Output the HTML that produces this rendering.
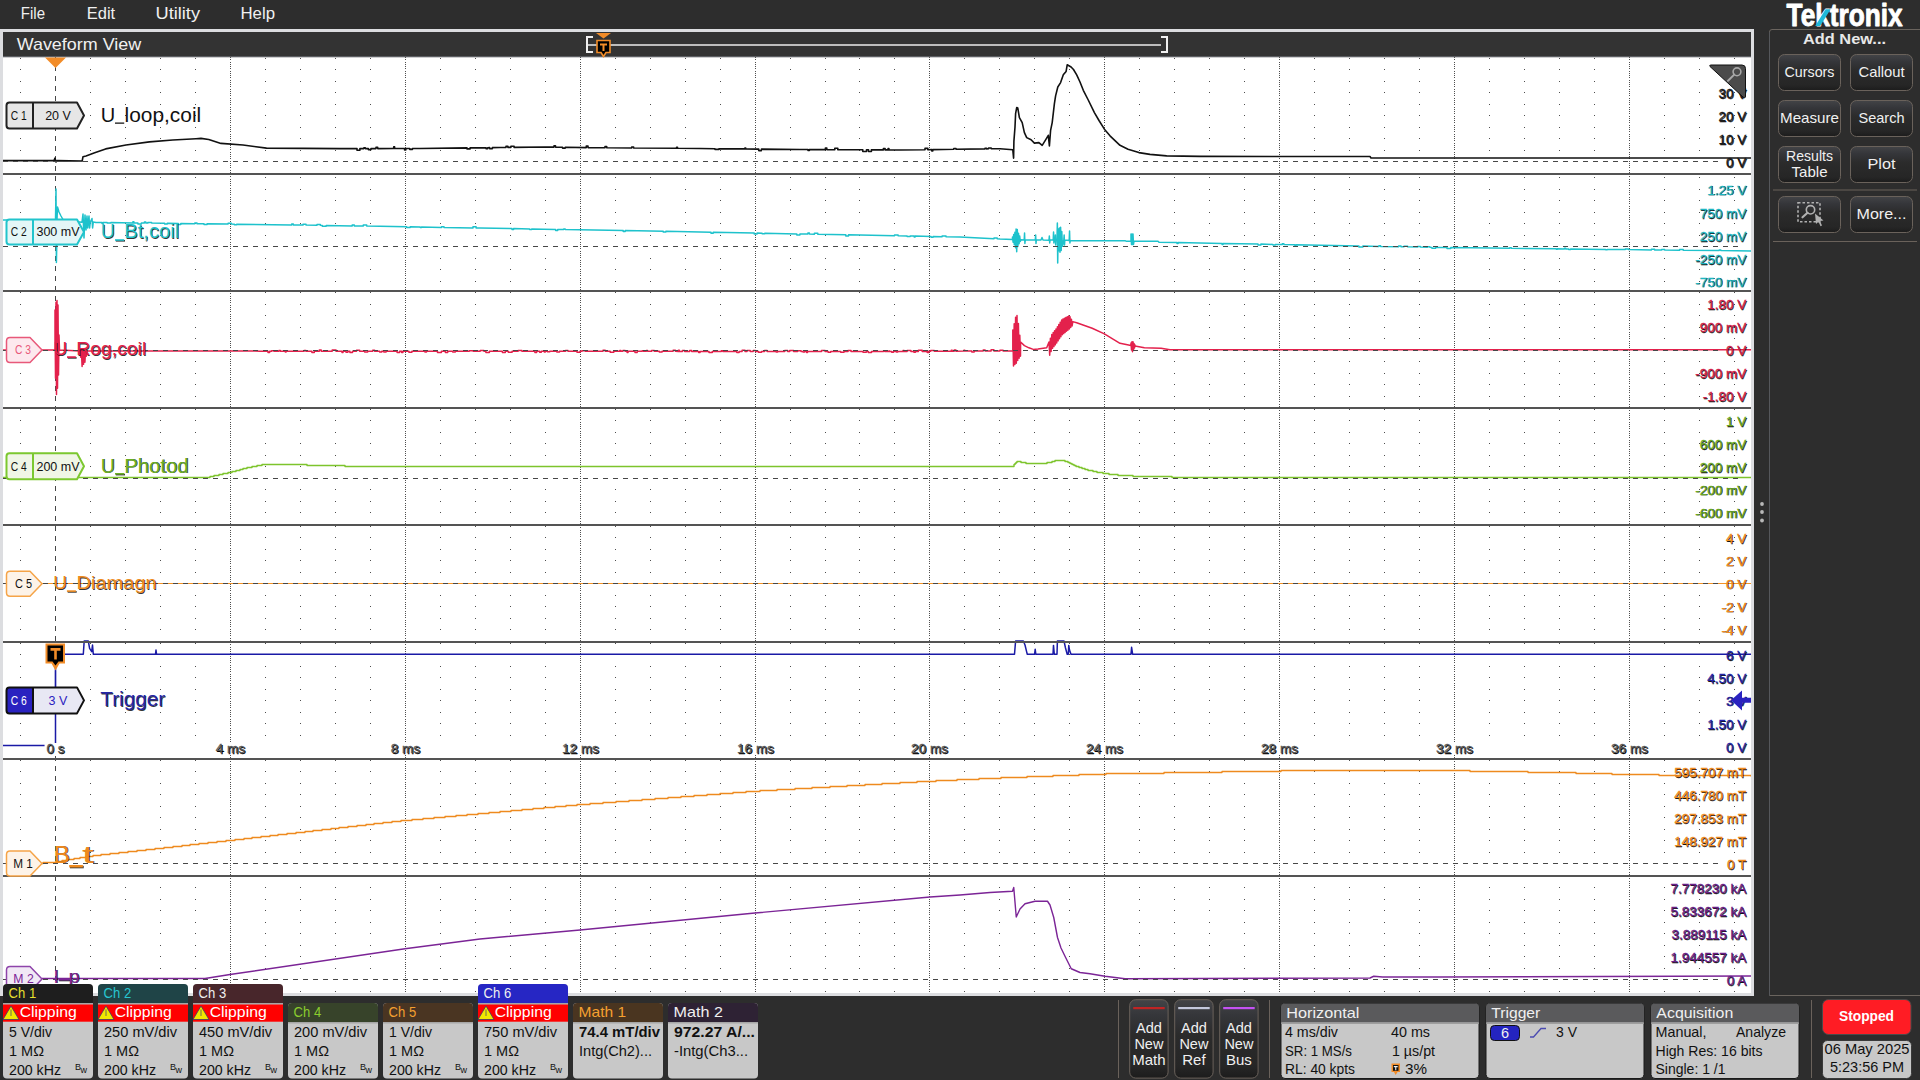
<!DOCTYPE html><html><head><meta charset="utf-8"><style>html,body{margin:0;padding:0;background:#2d2d2d;width:1920px;height:1080px;overflow:hidden}svg{position:absolute;left:0;top:0;font-family:"Liberation Sans",sans-serif}</style></head><body>
<svg width="1920" height="1080" viewBox="0 0 1920 1080">
<defs><linearGradient id="btn" x1="0" y1="0" x2="0" y2="1"><stop offset="0" stop-color="#434447"/><stop offset="0.2" stop-color="#35363a"/><stop offset="0.45" stop-color="#2b2b2b"/><stop offset="0.85" stop-color="#262626"/><stop offset="1" stop-color="#1c1c1c"/></linearGradient><clipPath id="plotclip"><rect x="3" y="57" width="1748" height="936"/></clipPath></defs>
<rect x="0" y="0" width="1920" height="1080" fill="#2d2d2d"/>
<text x="20.8" y="19.2" font-size="16" fill="#f0f0f0" textLength="24.2" lengthAdjust="spacingAndGlyphs">File</text>
<text x="86.8" y="19.2" font-size="16" fill="#f0f0f0" textLength="28.4" lengthAdjust="spacingAndGlyphs">Edit</text>
<text x="155.5" y="19.2" font-size="16" fill="#f0f0f0" textLength="44.5" lengthAdjust="spacingAndGlyphs">Utility</text>
<text x="240.5" y="19.2" font-size="16" fill="#f0f0f0" textLength="34.5" lengthAdjust="spacingAndGlyphs">Help</text>
<rect x="0" y="29" width="1754" height="967" fill="#dcdde0"/>
<rect x="3" y="32" width="1748" height="24" fill="#333333"/>
<rect x="3" y="56" width="1748" height="1.5" fill="#5c5e62"/>
<rect x="3" y="57.5" width="1748" height="935.5" fill="#ffffff"/>
<text x="16.7" y="50" font-size="17" fill="#f0f0f0" textLength="124.5" lengthAdjust="spacingAndGlyphs">Waveform View</text>
<path d="M593 37H587V52H593" fill="none" stroke="#f0f0f0" stroke-width="2"/>
<rect x="588" y="44" width="573" height="2" fill="#bdbdbd"/>
<path d="M1161 37H1167V52H1161" fill="none" stroke="#f0f0f0" stroke-width="2"/>
<path d="M596 33H611L603.5 38.5Z" fill="#f28c28"/>
<path d="M597 40.5H610V52.5H606L603.5 56.5L601 52.5H597Z" fill="#000" stroke="#f28c28" stroke-width="1.6"/>
<path d="M600 43.5H607V45.5H604.5V51H602.5V45.5H600Z" fill="#f28c28"/>
<g clip-path="url(#plotclip)">
<path d="M20 58.5h1M90 58.5h1M125 58.5h1M160 58.5h1M195 58.5h1M265 58.5h1M300 58.5h1M335 58.5h1M370 58.5h1M440 58.5h1M475 58.5h1M510 58.5h1M545 58.5h1M615 58.5h1M650 58.5h1M685 58.5h1M720 58.5h1M790 58.5h1M825 58.5h1M859 58.5h1M894 58.5h1M964 58.5h1M999 58.5h1M1034 58.5h1M1069 58.5h1M1139 58.5h1M1174 58.5h1M1209 58.5h1M1244 58.5h1M1314 58.5h1M1349 58.5h1M1384 58.5h1M1419 58.5h1M1489 58.5h1M1524 58.5h1M1559 58.5h1M1594 58.5h1M1664 58.5h1M1699 58.5h1M1734 58.5h1M20 69.5h1M90 69.5h1M125 69.5h1M160 69.5h1M195 69.5h1M265 69.5h1M300 69.5h1M335 69.5h1M370 69.5h1M440 69.5h1M475 69.5h1M510 69.5h1M545 69.5h1M615 69.5h1M650 69.5h1M685 69.5h1M720 69.5h1M790 69.5h1M825 69.5h1M859 69.5h1M894 69.5h1M964 69.5h1M999 69.5h1M1034 69.5h1M1069 69.5h1M1139 69.5h1M1174 69.5h1M1209 69.5h1M1244 69.5h1M1314 69.5h1M1349 69.5h1M1384 69.5h1M1419 69.5h1M1489 69.5h1M1524 69.5h1M1559 69.5h1M1594 69.5h1M1664 69.5h1M1699 69.5h1M1734 69.5h1M20 81.5h1M90 81.5h1M125 81.5h1M160 81.5h1M195 81.5h1M265 81.5h1M300 81.5h1M335 81.5h1M370 81.5h1M440 81.5h1M475 81.5h1M510 81.5h1M545 81.5h1M615 81.5h1M650 81.5h1M685 81.5h1M720 81.5h1M790 81.5h1M825 81.5h1M859 81.5h1M894 81.5h1M964 81.5h1M999 81.5h1M1034 81.5h1M1069 81.5h1M1139 81.5h1M1174 81.5h1M1209 81.5h1M1244 81.5h1M1314 81.5h1M1349 81.5h1M1384 81.5h1M1419 81.5h1M1489 81.5h1M1524 81.5h1M1559 81.5h1M1594 81.5h1M1664 81.5h1M1699 81.5h1M1734 81.5h1M20 92.5h1M90 92.5h1M125 92.5h1M160 92.5h1M195 92.5h1M265 92.5h1M300 92.5h1M335 92.5h1M370 92.5h1M440 92.5h1M475 92.5h1M510 92.5h1M545 92.5h1M615 92.5h1M650 92.5h1M685 92.5h1M720 92.5h1M790 92.5h1M825 92.5h1M859 92.5h1M894 92.5h1M964 92.5h1M999 92.5h1M1034 92.5h1M1069 92.5h1M1139 92.5h1M1174 92.5h1M1209 92.5h1M1244 92.5h1M1314 92.5h1M1349 92.5h1M1384 92.5h1M1419 92.5h1M1489 92.5h1M1524 92.5h1M1559 92.5h1M1594 92.5h1M1664 92.5h1M1699 92.5h1M1734 92.5h1M20 104.5h1M90 104.5h1M125 104.5h1M160 104.5h1M195 104.5h1M265 104.5h1M300 104.5h1M335 104.5h1M370 104.5h1M440 104.5h1M475 104.5h1M510 104.5h1M545 104.5h1M615 104.5h1M650 104.5h1M685 104.5h1M720 104.5h1M790 104.5h1M825 104.5h1M859 104.5h1M894 104.5h1M964 104.5h1M999 104.5h1M1034 104.5h1M1069 104.5h1M1139 104.5h1M1174 104.5h1M1209 104.5h1M1244 104.5h1M1314 104.5h1M1349 104.5h1M1384 104.5h1M1419 104.5h1M1489 104.5h1M1524 104.5h1M1559 104.5h1M1594 104.5h1M1664 104.5h1M1699 104.5h1M1734 104.5h1M20 115.5h1M90 115.5h1M125 115.5h1M160 115.5h1M195 115.5h1M265 115.5h1M300 115.5h1M335 115.5h1M370 115.5h1M440 115.5h1M475 115.5h1M510 115.5h1M545 115.5h1M615 115.5h1M650 115.5h1M685 115.5h1M720 115.5h1M790 115.5h1M825 115.5h1M859 115.5h1M894 115.5h1M964 115.5h1M999 115.5h1M1034 115.5h1M1069 115.5h1M1139 115.5h1M1174 115.5h1M1209 115.5h1M1244 115.5h1M1314 115.5h1M1349 115.5h1M1384 115.5h1M1419 115.5h1M1489 115.5h1M1524 115.5h1M1559 115.5h1M1594 115.5h1M1664 115.5h1M1699 115.5h1M1734 115.5h1M20 127.5h1M90 127.5h1M125 127.5h1M160 127.5h1M195 127.5h1M265 127.5h1M300 127.5h1M335 127.5h1M370 127.5h1M440 127.5h1M475 127.5h1M510 127.5h1M545 127.5h1M615 127.5h1M650 127.5h1M685 127.5h1M720 127.5h1M790 127.5h1M825 127.5h1M859 127.5h1M894 127.5h1M964 127.5h1M999 127.5h1M1034 127.5h1M1069 127.5h1M1139 127.5h1M1174 127.5h1M1209 127.5h1M1244 127.5h1M1314 127.5h1M1349 127.5h1M1384 127.5h1M1419 127.5h1M1489 127.5h1M1524 127.5h1M1559 127.5h1M1594 127.5h1M1664 127.5h1M1699 127.5h1M1734 127.5h1M20 138.5h1M90 138.5h1M125 138.5h1M160 138.5h1M195 138.5h1M265 138.5h1M300 138.5h1M335 138.5h1M370 138.5h1M440 138.5h1M475 138.5h1M510 138.5h1M545 138.5h1M615 138.5h1M650 138.5h1M685 138.5h1M720 138.5h1M790 138.5h1M825 138.5h1M859 138.5h1M894 138.5h1M964 138.5h1M999 138.5h1M1034 138.5h1M1069 138.5h1M1139 138.5h1M1174 138.5h1M1209 138.5h1M1244 138.5h1M1314 138.5h1M1349 138.5h1M1384 138.5h1M1419 138.5h1M1489 138.5h1M1524 138.5h1M1559 138.5h1M1594 138.5h1M1664 138.5h1M1699 138.5h1M1734 138.5h1M20 150.5h1M90 150.5h1M125 150.5h1M160 150.5h1M195 150.5h1M265 150.5h1M300 150.5h1M335 150.5h1M370 150.5h1M440 150.5h1M475 150.5h1M510 150.5h1M545 150.5h1M615 150.5h1M650 150.5h1M685 150.5h1M720 150.5h1M790 150.5h1M825 150.5h1M859 150.5h1M894 150.5h1M964 150.5h1M999 150.5h1M1034 150.5h1M1069 150.5h1M1139 150.5h1M1174 150.5h1M1209 150.5h1M1244 150.5h1M1314 150.5h1M1349 150.5h1M1384 150.5h1M1419 150.5h1M1489 150.5h1M1524 150.5h1M1559 150.5h1M1594 150.5h1M1664 150.5h1M1699 150.5h1M1734 150.5h1M20 177.5h1M90 177.5h1M125 177.5h1M160 177.5h1M195 177.5h1M265 177.5h1M300 177.5h1M335 177.5h1M370 177.5h1M440 177.5h1M475 177.5h1M510 177.5h1M545 177.5h1M615 177.5h1M650 177.5h1M685 177.5h1M720 177.5h1M790 177.5h1M825 177.5h1M859 177.5h1M894 177.5h1M964 177.5h1M999 177.5h1M1034 177.5h1M1069 177.5h1M1139 177.5h1M1174 177.5h1M1209 177.5h1M1244 177.5h1M1314 177.5h1M1349 177.5h1M1384 177.5h1M1419 177.5h1M1489 177.5h1M1524 177.5h1M1559 177.5h1M1594 177.5h1M1664 177.5h1M1699 177.5h1M1734 177.5h1M20 189.5h1M90 189.5h1M125 189.5h1M160 189.5h1M195 189.5h1M265 189.5h1M300 189.5h1M335 189.5h1M370 189.5h1M440 189.5h1M475 189.5h1M510 189.5h1M545 189.5h1M615 189.5h1M650 189.5h1M685 189.5h1M720 189.5h1M790 189.5h1M825 189.5h1M859 189.5h1M894 189.5h1M964 189.5h1M999 189.5h1M1034 189.5h1M1069 189.5h1M1139 189.5h1M1174 189.5h1M1209 189.5h1M1244 189.5h1M1314 189.5h1M1349 189.5h1M1384 189.5h1M1419 189.5h1M1489 189.5h1M1524 189.5h1M1559 189.5h1M1594 189.5h1M1664 189.5h1M1699 189.5h1M1734 189.5h1M20 200.5h1M90 200.5h1M125 200.5h1M160 200.5h1M195 200.5h1M265 200.5h1M300 200.5h1M335 200.5h1M370 200.5h1M440 200.5h1M475 200.5h1M510 200.5h1M545 200.5h1M615 200.5h1M650 200.5h1M685 200.5h1M720 200.5h1M790 200.5h1M825 200.5h1M859 200.5h1M894 200.5h1M964 200.5h1M999 200.5h1M1034 200.5h1M1069 200.5h1M1139 200.5h1M1174 200.5h1M1209 200.5h1M1244 200.5h1M1314 200.5h1M1349 200.5h1M1384 200.5h1M1419 200.5h1M1489 200.5h1M1524 200.5h1M1559 200.5h1M1594 200.5h1M1664 200.5h1M1699 200.5h1M1734 200.5h1M20 212.5h1M90 212.5h1M125 212.5h1M160 212.5h1M195 212.5h1M265 212.5h1M300 212.5h1M335 212.5h1M370 212.5h1M440 212.5h1M475 212.5h1M510 212.5h1M545 212.5h1M615 212.5h1M650 212.5h1M685 212.5h1M720 212.5h1M790 212.5h1M825 212.5h1M859 212.5h1M894 212.5h1M964 212.5h1M999 212.5h1M1034 212.5h1M1069 212.5h1M1139 212.5h1M1174 212.5h1M1209 212.5h1M1244 212.5h1M1314 212.5h1M1349 212.5h1M1384 212.5h1M1419 212.5h1M1489 212.5h1M1524 212.5h1M1559 212.5h1M1594 212.5h1M1664 212.5h1M1699 212.5h1M1734 212.5h1M20 223.5h1M90 223.5h1M125 223.5h1M160 223.5h1M195 223.5h1M265 223.5h1M300 223.5h1M335 223.5h1M370 223.5h1M440 223.5h1M475 223.5h1M510 223.5h1M545 223.5h1M615 223.5h1M650 223.5h1M685 223.5h1M720 223.5h1M790 223.5h1M825 223.5h1M859 223.5h1M894 223.5h1M964 223.5h1M999 223.5h1M1034 223.5h1M1069 223.5h1M1139 223.5h1M1174 223.5h1M1209 223.5h1M1244 223.5h1M1314 223.5h1M1349 223.5h1M1384 223.5h1M1419 223.5h1M1489 223.5h1M1524 223.5h1M1559 223.5h1M1594 223.5h1M1664 223.5h1M1699 223.5h1M1734 223.5h1M20 235.5h1M90 235.5h1M125 235.5h1M160 235.5h1M195 235.5h1M265 235.5h1M300 235.5h1M335 235.5h1M370 235.5h1M440 235.5h1M475 235.5h1M510 235.5h1M545 235.5h1M615 235.5h1M650 235.5h1M685 235.5h1M720 235.5h1M790 235.5h1M825 235.5h1M859 235.5h1M894 235.5h1M964 235.5h1M999 235.5h1M1034 235.5h1M1069 235.5h1M1139 235.5h1M1174 235.5h1M1209 235.5h1M1244 235.5h1M1314 235.5h1M1349 235.5h1M1384 235.5h1M1419 235.5h1M1489 235.5h1M1524 235.5h1M1559 235.5h1M1594 235.5h1M1664 235.5h1M1699 235.5h1M1734 235.5h1M20 258.5h1M90 258.5h1M125 258.5h1M160 258.5h1M195 258.5h1M265 258.5h1M300 258.5h1M335 258.5h1M370 258.5h1M440 258.5h1M475 258.5h1M510 258.5h1M545 258.5h1M615 258.5h1M650 258.5h1M685 258.5h1M720 258.5h1M790 258.5h1M825 258.5h1M859 258.5h1M894 258.5h1M964 258.5h1M999 258.5h1M1034 258.5h1M1069 258.5h1M1139 258.5h1M1174 258.5h1M1209 258.5h1M1244 258.5h1M1314 258.5h1M1349 258.5h1M1384 258.5h1M1419 258.5h1M1489 258.5h1M1524 258.5h1M1559 258.5h1M1594 258.5h1M1664 258.5h1M1699 258.5h1M1734 258.5h1M20 269.5h1M90 269.5h1M125 269.5h1M160 269.5h1M195 269.5h1M265 269.5h1M300 269.5h1M335 269.5h1M370 269.5h1M440 269.5h1M475 269.5h1M510 269.5h1M545 269.5h1M615 269.5h1M650 269.5h1M685 269.5h1M720 269.5h1M790 269.5h1M825 269.5h1M859 269.5h1M894 269.5h1M964 269.5h1M999 269.5h1M1034 269.5h1M1069 269.5h1M1139 269.5h1M1174 269.5h1M1209 269.5h1M1244 269.5h1M1314 269.5h1M1349 269.5h1M1384 269.5h1M1419 269.5h1M1489 269.5h1M1524 269.5h1M1559 269.5h1M1594 269.5h1M1664 269.5h1M1699 269.5h1M1734 269.5h1M20 281.5h1M90 281.5h1M125 281.5h1M160 281.5h1M195 281.5h1M265 281.5h1M300 281.5h1M335 281.5h1M370 281.5h1M440 281.5h1M475 281.5h1M510 281.5h1M545 281.5h1M615 281.5h1M650 281.5h1M685 281.5h1M720 281.5h1M790 281.5h1M825 281.5h1M859 281.5h1M894 281.5h1M964 281.5h1M999 281.5h1M1034 281.5h1M1069 281.5h1M1139 281.5h1M1174 281.5h1M1209 281.5h1M1244 281.5h1M1314 281.5h1M1349 281.5h1M1384 281.5h1M1419 281.5h1M1489 281.5h1M1524 281.5h1M1559 281.5h1M1594 281.5h1M1664 281.5h1M1699 281.5h1M1734 281.5h1M20 292.5h1M90 292.5h1M125 292.5h1M160 292.5h1M195 292.5h1M265 292.5h1M300 292.5h1M335 292.5h1M370 292.5h1M440 292.5h1M475 292.5h1M510 292.5h1M545 292.5h1M615 292.5h1M650 292.5h1M685 292.5h1M720 292.5h1M790 292.5h1M825 292.5h1M859 292.5h1M894 292.5h1M964 292.5h1M999 292.5h1M1034 292.5h1M1069 292.5h1M1139 292.5h1M1174 292.5h1M1209 292.5h1M1244 292.5h1M1314 292.5h1M1349 292.5h1M1384 292.5h1M1419 292.5h1M1489 292.5h1M1524 292.5h1M1559 292.5h1M1594 292.5h1M1664 292.5h1M1699 292.5h1M1734 292.5h1M20 304.5h1M90 304.5h1M125 304.5h1M160 304.5h1M195 304.5h1M265 304.5h1M300 304.5h1M335 304.5h1M370 304.5h1M440 304.5h1M475 304.5h1M510 304.5h1M545 304.5h1M615 304.5h1M650 304.5h1M685 304.5h1M720 304.5h1M790 304.5h1M825 304.5h1M859 304.5h1M894 304.5h1M964 304.5h1M999 304.5h1M1034 304.5h1M1069 304.5h1M1139 304.5h1M1174 304.5h1M1209 304.5h1M1244 304.5h1M1314 304.5h1M1349 304.5h1M1384 304.5h1M1419 304.5h1M1489 304.5h1M1524 304.5h1M1559 304.5h1M1594 304.5h1M1664 304.5h1M1699 304.5h1M1734 304.5h1M20 315.5h1M90 315.5h1M125 315.5h1M160 315.5h1M195 315.5h1M265 315.5h1M300 315.5h1M335 315.5h1M370 315.5h1M440 315.5h1M475 315.5h1M510 315.5h1M545 315.5h1M615 315.5h1M650 315.5h1M685 315.5h1M720 315.5h1M790 315.5h1M825 315.5h1M859 315.5h1M894 315.5h1M964 315.5h1M999 315.5h1M1034 315.5h1M1069 315.5h1M1139 315.5h1M1174 315.5h1M1209 315.5h1M1244 315.5h1M1314 315.5h1M1349 315.5h1M1384 315.5h1M1419 315.5h1M1489 315.5h1M1524 315.5h1M1559 315.5h1M1594 315.5h1M1664 315.5h1M1699 315.5h1M1734 315.5h1M20 327.5h1M90 327.5h1M125 327.5h1M160 327.5h1M195 327.5h1M265 327.5h1M300 327.5h1M335 327.5h1M370 327.5h1M440 327.5h1M475 327.5h1M510 327.5h1M545 327.5h1M615 327.5h1M650 327.5h1M685 327.5h1M720 327.5h1M790 327.5h1M825 327.5h1M859 327.5h1M894 327.5h1M964 327.5h1M999 327.5h1M1034 327.5h1M1069 327.5h1M1139 327.5h1M1174 327.5h1M1209 327.5h1M1244 327.5h1M1314 327.5h1M1349 327.5h1M1384 327.5h1M1419 327.5h1M1489 327.5h1M1524 327.5h1M1559 327.5h1M1594 327.5h1M1664 327.5h1M1699 327.5h1M1734 327.5h1M20 338.5h1M90 338.5h1M125 338.5h1M160 338.5h1M195 338.5h1M265 338.5h1M300 338.5h1M335 338.5h1M370 338.5h1M440 338.5h1M475 338.5h1M510 338.5h1M545 338.5h1M615 338.5h1M650 338.5h1M685 338.5h1M720 338.5h1M790 338.5h1M825 338.5h1M859 338.5h1M894 338.5h1M964 338.5h1M999 338.5h1M1034 338.5h1M1069 338.5h1M1139 338.5h1M1174 338.5h1M1209 338.5h1M1244 338.5h1M1314 338.5h1M1349 338.5h1M1384 338.5h1M1419 338.5h1M1489 338.5h1M1524 338.5h1M1559 338.5h1M1594 338.5h1M1664 338.5h1M1699 338.5h1M1734 338.5h1M20 361.5h1M90 361.5h1M125 361.5h1M160 361.5h1M195 361.5h1M265 361.5h1M300 361.5h1M335 361.5h1M370 361.5h1M440 361.5h1M475 361.5h1M510 361.5h1M545 361.5h1M615 361.5h1M650 361.5h1M685 361.5h1M720 361.5h1M790 361.5h1M825 361.5h1M859 361.5h1M894 361.5h1M964 361.5h1M999 361.5h1M1034 361.5h1M1069 361.5h1M1139 361.5h1M1174 361.5h1M1209 361.5h1M1244 361.5h1M1314 361.5h1M1349 361.5h1M1384 361.5h1M1419 361.5h1M1489 361.5h1M1524 361.5h1M1559 361.5h1M1594 361.5h1M1664 361.5h1M1699 361.5h1M1734 361.5h1M20 373.5h1M90 373.5h1M125 373.5h1M160 373.5h1M195 373.5h1M265 373.5h1M300 373.5h1M335 373.5h1M370 373.5h1M440 373.5h1M475 373.5h1M510 373.5h1M545 373.5h1M615 373.5h1M650 373.5h1M685 373.5h1M720 373.5h1M790 373.5h1M825 373.5h1M859 373.5h1M894 373.5h1M964 373.5h1M999 373.5h1M1034 373.5h1M1069 373.5h1M1139 373.5h1M1174 373.5h1M1209 373.5h1M1244 373.5h1M1314 373.5h1M1349 373.5h1M1384 373.5h1M1419 373.5h1M1489 373.5h1M1524 373.5h1M1559 373.5h1M1594 373.5h1M1664 373.5h1M1699 373.5h1M1734 373.5h1M20 384.5h1M90 384.5h1M125 384.5h1M160 384.5h1M195 384.5h1M265 384.5h1M300 384.5h1M335 384.5h1M370 384.5h1M440 384.5h1M475 384.5h1M510 384.5h1M545 384.5h1M615 384.5h1M650 384.5h1M685 384.5h1M720 384.5h1M790 384.5h1M825 384.5h1M859 384.5h1M894 384.5h1M964 384.5h1M999 384.5h1M1034 384.5h1M1069 384.5h1M1139 384.5h1M1174 384.5h1M1209 384.5h1M1244 384.5h1M1314 384.5h1M1349 384.5h1M1384 384.5h1M1419 384.5h1M1489 384.5h1M1524 384.5h1M1559 384.5h1M1594 384.5h1M1664 384.5h1M1699 384.5h1M1734 384.5h1M20 396.5h1M90 396.5h1M125 396.5h1M160 396.5h1M195 396.5h1M265 396.5h1M300 396.5h1M335 396.5h1M370 396.5h1M440 396.5h1M475 396.5h1M510 396.5h1M545 396.5h1M615 396.5h1M650 396.5h1M685 396.5h1M720 396.5h1M790 396.5h1M825 396.5h1M859 396.5h1M894 396.5h1M964 396.5h1M999 396.5h1M1034 396.5h1M1069 396.5h1M1139 396.5h1M1174 396.5h1M1209 396.5h1M1244 396.5h1M1314 396.5h1M1349 396.5h1M1384 396.5h1M1419 396.5h1M1489 396.5h1M1524 396.5h1M1559 396.5h1M1594 396.5h1M1664 396.5h1M1699 396.5h1M1734 396.5h1M20 409.5h1M90 409.5h1M125 409.5h1M160 409.5h1M195 409.5h1M265 409.5h1M300 409.5h1M335 409.5h1M370 409.5h1M440 409.5h1M475 409.5h1M510 409.5h1M545 409.5h1M615 409.5h1M650 409.5h1M685 409.5h1M720 409.5h1M790 409.5h1M825 409.5h1M859 409.5h1M894 409.5h1M964 409.5h1M999 409.5h1M1034 409.5h1M1069 409.5h1M1139 409.5h1M1174 409.5h1M1209 409.5h1M1244 409.5h1M1314 409.5h1M1349 409.5h1M1384 409.5h1M1419 409.5h1M1489 409.5h1M1524 409.5h1M1559 409.5h1M1594 409.5h1M1664 409.5h1M1699 409.5h1M1734 409.5h1M20 420.5h1M90 420.5h1M125 420.5h1M160 420.5h1M195 420.5h1M265 420.5h1M300 420.5h1M335 420.5h1M370 420.5h1M440 420.5h1M475 420.5h1M510 420.5h1M545 420.5h1M615 420.5h1M650 420.5h1M685 420.5h1M720 420.5h1M790 420.5h1M825 420.5h1M859 420.5h1M894 420.5h1M964 420.5h1M999 420.5h1M1034 420.5h1M1069 420.5h1M1139 420.5h1M1174 420.5h1M1209 420.5h1M1244 420.5h1M1314 420.5h1M1349 420.5h1M1384 420.5h1M1419 420.5h1M1489 420.5h1M1524 420.5h1M1559 420.5h1M1594 420.5h1M1664 420.5h1M1699 420.5h1M1734 420.5h1M20 432.5h1M90 432.5h1M125 432.5h1M160 432.5h1M195 432.5h1M265 432.5h1M300 432.5h1M335 432.5h1M370 432.5h1M440 432.5h1M475 432.5h1M510 432.5h1M545 432.5h1M615 432.5h1M650 432.5h1M685 432.5h1M720 432.5h1M790 432.5h1M825 432.5h1M859 432.5h1M894 432.5h1M964 432.5h1M999 432.5h1M1034 432.5h1M1069 432.5h1M1139 432.5h1M1174 432.5h1M1209 432.5h1M1244 432.5h1M1314 432.5h1M1349 432.5h1M1384 432.5h1M1419 432.5h1M1489 432.5h1M1524 432.5h1M1559 432.5h1M1594 432.5h1M1664 432.5h1M1699 432.5h1M1734 432.5h1M20 443.5h1M90 443.5h1M125 443.5h1M160 443.5h1M195 443.5h1M265 443.5h1M300 443.5h1M335 443.5h1M370 443.5h1M440 443.5h1M475 443.5h1M510 443.5h1M545 443.5h1M615 443.5h1M650 443.5h1M685 443.5h1M720 443.5h1M790 443.5h1M825 443.5h1M859 443.5h1M894 443.5h1M964 443.5h1M999 443.5h1M1034 443.5h1M1069 443.5h1M1139 443.5h1M1174 443.5h1M1209 443.5h1M1244 443.5h1M1314 443.5h1M1349 443.5h1M1384 443.5h1M1419 443.5h1M1489 443.5h1M1524 443.5h1M1559 443.5h1M1594 443.5h1M1664 443.5h1M1699 443.5h1M1734 443.5h1M20 455.5h1M90 455.5h1M125 455.5h1M160 455.5h1M195 455.5h1M265 455.5h1M300 455.5h1M335 455.5h1M370 455.5h1M440 455.5h1M475 455.5h1M510 455.5h1M545 455.5h1M615 455.5h1M650 455.5h1M685 455.5h1M720 455.5h1M790 455.5h1M825 455.5h1M859 455.5h1M894 455.5h1M964 455.5h1M999 455.5h1M1034 455.5h1M1069 455.5h1M1139 455.5h1M1174 455.5h1M1209 455.5h1M1244 455.5h1M1314 455.5h1M1349 455.5h1M1384 455.5h1M1419 455.5h1M1489 455.5h1M1524 455.5h1M1559 455.5h1M1594 455.5h1M1664 455.5h1M1699 455.5h1M1734 455.5h1M20 466.5h1M90 466.5h1M125 466.5h1M160 466.5h1M195 466.5h1M265 466.5h1M300 466.5h1M335 466.5h1M370 466.5h1M440 466.5h1M475 466.5h1M510 466.5h1M545 466.5h1M615 466.5h1M650 466.5h1M685 466.5h1M720 466.5h1M790 466.5h1M825 466.5h1M859 466.5h1M894 466.5h1M964 466.5h1M999 466.5h1M1034 466.5h1M1069 466.5h1M1139 466.5h1M1174 466.5h1M1209 466.5h1M1244 466.5h1M1314 466.5h1M1349 466.5h1M1384 466.5h1M1419 466.5h1M1489 466.5h1M1524 466.5h1M1559 466.5h1M1594 466.5h1M1664 466.5h1M1699 466.5h1M1734 466.5h1M20 489.5h1M90 489.5h1M125 489.5h1M160 489.5h1M195 489.5h1M265 489.5h1M300 489.5h1M335 489.5h1M370 489.5h1M440 489.5h1M475 489.5h1M510 489.5h1M545 489.5h1M615 489.5h1M650 489.5h1M685 489.5h1M720 489.5h1M790 489.5h1M825 489.5h1M859 489.5h1M894 489.5h1M964 489.5h1M999 489.5h1M1034 489.5h1M1069 489.5h1M1139 489.5h1M1174 489.5h1M1209 489.5h1M1244 489.5h1M1314 489.5h1M1349 489.5h1M1384 489.5h1M1419 489.5h1M1489 489.5h1M1524 489.5h1M1559 489.5h1M1594 489.5h1M1664 489.5h1M1699 489.5h1M1734 489.5h1M20 501.5h1M90 501.5h1M125 501.5h1M160 501.5h1M195 501.5h1M265 501.5h1M300 501.5h1M335 501.5h1M370 501.5h1M440 501.5h1M475 501.5h1M510 501.5h1M545 501.5h1M615 501.5h1M650 501.5h1M685 501.5h1M720 501.5h1M790 501.5h1M825 501.5h1M859 501.5h1M894 501.5h1M964 501.5h1M999 501.5h1M1034 501.5h1M1069 501.5h1M1139 501.5h1M1174 501.5h1M1209 501.5h1M1244 501.5h1M1314 501.5h1M1349 501.5h1M1384 501.5h1M1419 501.5h1M1489 501.5h1M1524 501.5h1M1559 501.5h1M1594 501.5h1M1664 501.5h1M1699 501.5h1M1734 501.5h1M20 512.5h1M90 512.5h1M125 512.5h1M160 512.5h1M195 512.5h1M265 512.5h1M300 512.5h1M335 512.5h1M370 512.5h1M440 512.5h1M475 512.5h1M510 512.5h1M545 512.5h1M615 512.5h1M650 512.5h1M685 512.5h1M720 512.5h1M790 512.5h1M825 512.5h1M859 512.5h1M894 512.5h1M964 512.5h1M999 512.5h1M1034 512.5h1M1069 512.5h1M1139 512.5h1M1174 512.5h1M1209 512.5h1M1244 512.5h1M1314 512.5h1M1349 512.5h1M1384 512.5h1M1419 512.5h1M1489 512.5h1M1524 512.5h1M1559 512.5h1M1594 512.5h1M1664 512.5h1M1699 512.5h1M1734 512.5h1M20 526.5h1M90 526.5h1M125 526.5h1M160 526.5h1M195 526.5h1M265 526.5h1M300 526.5h1M335 526.5h1M370 526.5h1M440 526.5h1M475 526.5h1M510 526.5h1M545 526.5h1M615 526.5h1M650 526.5h1M685 526.5h1M720 526.5h1M790 526.5h1M825 526.5h1M859 526.5h1M894 526.5h1M964 526.5h1M999 526.5h1M1034 526.5h1M1069 526.5h1M1139 526.5h1M1174 526.5h1M1209 526.5h1M1244 526.5h1M1314 526.5h1M1349 526.5h1M1384 526.5h1M1419 526.5h1M1489 526.5h1M1524 526.5h1M1559 526.5h1M1594 526.5h1M1664 526.5h1M1699 526.5h1M1734 526.5h1M20 537.5h1M90 537.5h1M125 537.5h1M160 537.5h1M195 537.5h1M265 537.5h1M300 537.5h1M335 537.5h1M370 537.5h1M440 537.5h1M475 537.5h1M510 537.5h1M545 537.5h1M615 537.5h1M650 537.5h1M685 537.5h1M720 537.5h1M790 537.5h1M825 537.5h1M859 537.5h1M894 537.5h1M964 537.5h1M999 537.5h1M1034 537.5h1M1069 537.5h1M1139 537.5h1M1174 537.5h1M1209 537.5h1M1244 537.5h1M1314 537.5h1M1349 537.5h1M1384 537.5h1M1419 537.5h1M1489 537.5h1M1524 537.5h1M1559 537.5h1M1594 537.5h1M1664 537.5h1M1699 537.5h1M1734 537.5h1M20 549.5h1M90 549.5h1M125 549.5h1M160 549.5h1M195 549.5h1M265 549.5h1M300 549.5h1M335 549.5h1M370 549.5h1M440 549.5h1M475 549.5h1M510 549.5h1M545 549.5h1M615 549.5h1M650 549.5h1M685 549.5h1M720 549.5h1M790 549.5h1M825 549.5h1M859 549.5h1M894 549.5h1M964 549.5h1M999 549.5h1M1034 549.5h1M1069 549.5h1M1139 549.5h1M1174 549.5h1M1209 549.5h1M1244 549.5h1M1314 549.5h1M1349 549.5h1M1384 549.5h1M1419 549.5h1M1489 549.5h1M1524 549.5h1M1559 549.5h1M1594 549.5h1M1664 549.5h1M1699 549.5h1M1734 549.5h1M20 560.5h1M90 560.5h1M125 560.5h1M160 560.5h1M195 560.5h1M265 560.5h1M300 560.5h1M335 560.5h1M370 560.5h1M440 560.5h1M475 560.5h1M510 560.5h1M545 560.5h1M615 560.5h1M650 560.5h1M685 560.5h1M720 560.5h1M790 560.5h1M825 560.5h1M859 560.5h1M894 560.5h1M964 560.5h1M999 560.5h1M1034 560.5h1M1069 560.5h1M1139 560.5h1M1174 560.5h1M1209 560.5h1M1244 560.5h1M1314 560.5h1M1349 560.5h1M1384 560.5h1M1419 560.5h1M1489 560.5h1M1524 560.5h1M1559 560.5h1M1594 560.5h1M1664 560.5h1M1699 560.5h1M1734 560.5h1M20 572.5h1M90 572.5h1M125 572.5h1M160 572.5h1M195 572.5h1M265 572.5h1M300 572.5h1M335 572.5h1M370 572.5h1M440 572.5h1M475 572.5h1M510 572.5h1M545 572.5h1M615 572.5h1M650 572.5h1M685 572.5h1M720 572.5h1M790 572.5h1M825 572.5h1M859 572.5h1M894 572.5h1M964 572.5h1M999 572.5h1M1034 572.5h1M1069 572.5h1M1139 572.5h1M1174 572.5h1M1209 572.5h1M1244 572.5h1M1314 572.5h1M1349 572.5h1M1384 572.5h1M1419 572.5h1M1489 572.5h1M1524 572.5h1M1559 572.5h1M1594 572.5h1M1664 572.5h1M1699 572.5h1M1734 572.5h1M20 595.5h1M90 595.5h1M125 595.5h1M160 595.5h1M195 595.5h1M265 595.5h1M300 595.5h1M335 595.5h1M370 595.5h1M440 595.5h1M475 595.5h1M510 595.5h1M545 595.5h1M615 595.5h1M650 595.5h1M685 595.5h1M720 595.5h1M790 595.5h1M825 595.5h1M859 595.5h1M894 595.5h1M964 595.5h1M999 595.5h1M1034 595.5h1M1069 595.5h1M1139 595.5h1M1174 595.5h1M1209 595.5h1M1244 595.5h1M1314 595.5h1M1349 595.5h1M1384 595.5h1M1419 595.5h1M1489 595.5h1M1524 595.5h1M1559 595.5h1M1594 595.5h1M1664 595.5h1M1699 595.5h1M1734 595.5h1M20 606.5h1M90 606.5h1M125 606.5h1M160 606.5h1M195 606.5h1M265 606.5h1M300 606.5h1M335 606.5h1M370 606.5h1M440 606.5h1M475 606.5h1M510 606.5h1M545 606.5h1M615 606.5h1M650 606.5h1M685 606.5h1M720 606.5h1M790 606.5h1M825 606.5h1M859 606.5h1M894 606.5h1M964 606.5h1M999 606.5h1M1034 606.5h1M1069 606.5h1M1139 606.5h1M1174 606.5h1M1209 606.5h1M1244 606.5h1M1314 606.5h1M1349 606.5h1M1384 606.5h1M1419 606.5h1M1489 606.5h1M1524 606.5h1M1559 606.5h1M1594 606.5h1M1664 606.5h1M1699 606.5h1M1734 606.5h1M20 618.5h1M90 618.5h1M125 618.5h1M160 618.5h1M195 618.5h1M265 618.5h1M300 618.5h1M335 618.5h1M370 618.5h1M440 618.5h1M475 618.5h1M510 618.5h1M545 618.5h1M615 618.5h1M650 618.5h1M685 618.5h1M720 618.5h1M790 618.5h1M825 618.5h1M859 618.5h1M894 618.5h1M964 618.5h1M999 618.5h1M1034 618.5h1M1069 618.5h1M1139 618.5h1M1174 618.5h1M1209 618.5h1M1244 618.5h1M1314 618.5h1M1349 618.5h1M1384 618.5h1M1419 618.5h1M1489 618.5h1M1524 618.5h1M1559 618.5h1M1594 618.5h1M1664 618.5h1M1699 618.5h1M1734 618.5h1M20 629.5h1M90 629.5h1M125 629.5h1M160 629.5h1M195 629.5h1M265 629.5h1M300 629.5h1M335 629.5h1M370 629.5h1M440 629.5h1M475 629.5h1M510 629.5h1M545 629.5h1M615 629.5h1M650 629.5h1M685 629.5h1M720 629.5h1M790 629.5h1M825 629.5h1M859 629.5h1M894 629.5h1M964 629.5h1M999 629.5h1M1034 629.5h1M1069 629.5h1M1139 629.5h1M1174 629.5h1M1209 629.5h1M1244 629.5h1M1314 629.5h1M1349 629.5h1M1384 629.5h1M1419 629.5h1M1489 629.5h1M1524 629.5h1M1559 629.5h1M1594 629.5h1M1664 629.5h1M1699 629.5h1M1734 629.5h1M20 643.5h1M90 643.5h1M125 643.5h1M160 643.5h1M195 643.5h1M265 643.5h1M300 643.5h1M335 643.5h1M370 643.5h1M440 643.5h1M475 643.5h1M510 643.5h1M545 643.5h1M615 643.5h1M650 643.5h1M685 643.5h1M720 643.5h1M790 643.5h1M825 643.5h1M859 643.5h1M894 643.5h1M964 643.5h1M999 643.5h1M1034 643.5h1M1069 643.5h1M1139 643.5h1M1174 643.5h1M1209 643.5h1M1244 643.5h1M1314 643.5h1M1349 643.5h1M1384 643.5h1M1419 643.5h1M1489 643.5h1M1524 643.5h1M1559 643.5h1M1594 643.5h1M1664 643.5h1M1699 643.5h1M1734 643.5h1M20 654.5h1M90 654.5h1M125 654.5h1M160 654.5h1M195 654.5h1M265 654.5h1M300 654.5h1M335 654.5h1M370 654.5h1M440 654.5h1M475 654.5h1M510 654.5h1M545 654.5h1M615 654.5h1M650 654.5h1M685 654.5h1M720 654.5h1M790 654.5h1M825 654.5h1M859 654.5h1M894 654.5h1M964 654.5h1M999 654.5h1M1034 654.5h1M1069 654.5h1M1139 654.5h1M1174 654.5h1M1209 654.5h1M1244 654.5h1M1314 654.5h1M1349 654.5h1M1384 654.5h1M1419 654.5h1M1489 654.5h1M1524 654.5h1M1559 654.5h1M1594 654.5h1M1664 654.5h1M1699 654.5h1M1734 654.5h1M20 666.5h1M90 666.5h1M125 666.5h1M160 666.5h1M195 666.5h1M265 666.5h1M300 666.5h1M335 666.5h1M370 666.5h1M440 666.5h1M475 666.5h1M510 666.5h1M545 666.5h1M615 666.5h1M650 666.5h1M685 666.5h1M720 666.5h1M790 666.5h1M825 666.5h1M859 666.5h1M894 666.5h1M964 666.5h1M999 666.5h1M1034 666.5h1M1069 666.5h1M1139 666.5h1M1174 666.5h1M1209 666.5h1M1244 666.5h1M1314 666.5h1M1349 666.5h1M1384 666.5h1M1419 666.5h1M1489 666.5h1M1524 666.5h1M1559 666.5h1M1594 666.5h1M1664 666.5h1M1699 666.5h1M1734 666.5h1M20 677.5h1M90 677.5h1M125 677.5h1M160 677.5h1M195 677.5h1M265 677.5h1M300 677.5h1M335 677.5h1M370 677.5h1M440 677.5h1M475 677.5h1M510 677.5h1M545 677.5h1M615 677.5h1M650 677.5h1M685 677.5h1M720 677.5h1M790 677.5h1M825 677.5h1M859 677.5h1M894 677.5h1M964 677.5h1M999 677.5h1M1034 677.5h1M1069 677.5h1M1139 677.5h1M1174 677.5h1M1209 677.5h1M1244 677.5h1M1314 677.5h1M1349 677.5h1M1384 677.5h1M1419 677.5h1M1489 677.5h1M1524 677.5h1M1559 677.5h1M1594 677.5h1M1664 677.5h1M1699 677.5h1M1734 677.5h1M20 689.5h1M90 689.5h1M125 689.5h1M160 689.5h1M195 689.5h1M265 689.5h1M300 689.5h1M335 689.5h1M370 689.5h1M440 689.5h1M475 689.5h1M510 689.5h1M545 689.5h1M615 689.5h1M650 689.5h1M685 689.5h1M720 689.5h1M790 689.5h1M825 689.5h1M859 689.5h1M894 689.5h1M964 689.5h1M999 689.5h1M1034 689.5h1M1069 689.5h1M1139 689.5h1M1174 689.5h1M1209 689.5h1M1244 689.5h1M1314 689.5h1M1349 689.5h1M1384 689.5h1M1419 689.5h1M1489 689.5h1M1524 689.5h1M1559 689.5h1M1594 689.5h1M1664 689.5h1M1699 689.5h1M1734 689.5h1M20 700.5h1M90 700.5h1M125 700.5h1M160 700.5h1M195 700.5h1M265 700.5h1M300 700.5h1M335 700.5h1M370 700.5h1M440 700.5h1M475 700.5h1M510 700.5h1M545 700.5h1M615 700.5h1M650 700.5h1M685 700.5h1M720 700.5h1M790 700.5h1M825 700.5h1M859 700.5h1M894 700.5h1M964 700.5h1M999 700.5h1M1034 700.5h1M1069 700.5h1M1139 700.5h1M1174 700.5h1M1209 700.5h1M1244 700.5h1M1314 700.5h1M1349 700.5h1M1384 700.5h1M1419 700.5h1M1489 700.5h1M1524 700.5h1M1559 700.5h1M1594 700.5h1M1664 700.5h1M1699 700.5h1M1734 700.5h1M20 712.5h1M90 712.5h1M125 712.5h1M160 712.5h1M195 712.5h1M265 712.5h1M300 712.5h1M335 712.5h1M370 712.5h1M440 712.5h1M475 712.5h1M510 712.5h1M545 712.5h1M615 712.5h1M650 712.5h1M685 712.5h1M720 712.5h1M790 712.5h1M825 712.5h1M859 712.5h1M894 712.5h1M964 712.5h1M999 712.5h1M1034 712.5h1M1069 712.5h1M1139 712.5h1M1174 712.5h1M1209 712.5h1M1244 712.5h1M1314 712.5h1M1349 712.5h1M1384 712.5h1M1419 712.5h1M1489 712.5h1M1524 712.5h1M1559 712.5h1M1594 712.5h1M1664 712.5h1M1699 712.5h1M1734 712.5h1M20 723.5h1M90 723.5h1M125 723.5h1M160 723.5h1M195 723.5h1M265 723.5h1M300 723.5h1M335 723.5h1M370 723.5h1M440 723.5h1M475 723.5h1M510 723.5h1M545 723.5h1M615 723.5h1M650 723.5h1M685 723.5h1M720 723.5h1M790 723.5h1M825 723.5h1M859 723.5h1M894 723.5h1M964 723.5h1M999 723.5h1M1034 723.5h1M1069 723.5h1M1139 723.5h1M1174 723.5h1M1209 723.5h1M1244 723.5h1M1314 723.5h1M1349 723.5h1M1384 723.5h1M1419 723.5h1M1489 723.5h1M1524 723.5h1M1559 723.5h1M1594 723.5h1M1664 723.5h1M1699 723.5h1M1734 723.5h1M20 735.5h1M90 735.5h1M125 735.5h1M160 735.5h1M195 735.5h1M265 735.5h1M300 735.5h1M335 735.5h1M370 735.5h1M440 735.5h1M475 735.5h1M510 735.5h1M545 735.5h1M615 735.5h1M650 735.5h1M685 735.5h1M720 735.5h1M790 735.5h1M825 735.5h1M859 735.5h1M894 735.5h1M964 735.5h1M999 735.5h1M1034 735.5h1M1069 735.5h1M1139 735.5h1M1174 735.5h1M1209 735.5h1M1244 735.5h1M1314 735.5h1M1349 735.5h1M1384 735.5h1M1419 735.5h1M1489 735.5h1M1524 735.5h1M1559 735.5h1M1594 735.5h1M1664 735.5h1M1699 735.5h1M1734 735.5h1M20 760.5h1M90 760.5h1M125 760.5h1M160 760.5h1M195 760.5h1M265 760.5h1M300 760.5h1M335 760.5h1M370 760.5h1M440 760.5h1M475 760.5h1M510 760.5h1M545 760.5h1M615 760.5h1M650 760.5h1M685 760.5h1M720 760.5h1M790 760.5h1M825 760.5h1M859 760.5h1M894 760.5h1M964 760.5h1M999 760.5h1M1034 760.5h1M1069 760.5h1M1139 760.5h1M1174 760.5h1M1209 760.5h1M1244 760.5h1M1314 760.5h1M1349 760.5h1M1384 760.5h1M1419 760.5h1M1489 760.5h1M1524 760.5h1M1559 760.5h1M1594 760.5h1M1664 760.5h1M1699 760.5h1M1734 760.5h1M20 771.5h1M90 771.5h1M125 771.5h1M160 771.5h1M195 771.5h1M265 771.5h1M300 771.5h1M335 771.5h1M370 771.5h1M440 771.5h1M475 771.5h1M510 771.5h1M545 771.5h1M615 771.5h1M650 771.5h1M685 771.5h1M720 771.5h1M790 771.5h1M825 771.5h1M859 771.5h1M894 771.5h1M964 771.5h1M999 771.5h1M1034 771.5h1M1069 771.5h1M1139 771.5h1M1174 771.5h1M1209 771.5h1M1244 771.5h1M1314 771.5h1M1349 771.5h1M1384 771.5h1M1419 771.5h1M1489 771.5h1M1524 771.5h1M1559 771.5h1M1594 771.5h1M1664 771.5h1M1699 771.5h1M1734 771.5h1M20 783.5h1M90 783.5h1M125 783.5h1M160 783.5h1M195 783.5h1M265 783.5h1M300 783.5h1M335 783.5h1M370 783.5h1M440 783.5h1M475 783.5h1M510 783.5h1M545 783.5h1M615 783.5h1M650 783.5h1M685 783.5h1M720 783.5h1M790 783.5h1M825 783.5h1M859 783.5h1M894 783.5h1M964 783.5h1M999 783.5h1M1034 783.5h1M1069 783.5h1M1139 783.5h1M1174 783.5h1M1209 783.5h1M1244 783.5h1M1314 783.5h1M1349 783.5h1M1384 783.5h1M1419 783.5h1M1489 783.5h1M1524 783.5h1M1559 783.5h1M1594 783.5h1M1664 783.5h1M1699 783.5h1M1734 783.5h1M20 794.5h1M90 794.5h1M125 794.5h1M160 794.5h1M195 794.5h1M265 794.5h1M300 794.5h1M335 794.5h1M370 794.5h1M440 794.5h1M475 794.5h1M510 794.5h1M545 794.5h1M615 794.5h1M650 794.5h1M685 794.5h1M720 794.5h1M790 794.5h1M825 794.5h1M859 794.5h1M894 794.5h1M964 794.5h1M999 794.5h1M1034 794.5h1M1069 794.5h1M1139 794.5h1M1174 794.5h1M1209 794.5h1M1244 794.5h1M1314 794.5h1M1349 794.5h1M1384 794.5h1M1419 794.5h1M1489 794.5h1M1524 794.5h1M1559 794.5h1M1594 794.5h1M1664 794.5h1M1699 794.5h1M1734 794.5h1M20 806.5h1M90 806.5h1M125 806.5h1M160 806.5h1M195 806.5h1M265 806.5h1M300 806.5h1M335 806.5h1M370 806.5h1M440 806.5h1M475 806.5h1M510 806.5h1M545 806.5h1M615 806.5h1M650 806.5h1M685 806.5h1M720 806.5h1M790 806.5h1M825 806.5h1M859 806.5h1M894 806.5h1M964 806.5h1M999 806.5h1M1034 806.5h1M1069 806.5h1M1139 806.5h1M1174 806.5h1M1209 806.5h1M1244 806.5h1M1314 806.5h1M1349 806.5h1M1384 806.5h1M1419 806.5h1M1489 806.5h1M1524 806.5h1M1559 806.5h1M1594 806.5h1M1664 806.5h1M1699 806.5h1M1734 806.5h1M20 817.5h1M90 817.5h1M125 817.5h1M160 817.5h1M195 817.5h1M265 817.5h1M300 817.5h1M335 817.5h1M370 817.5h1M440 817.5h1M475 817.5h1M510 817.5h1M545 817.5h1M615 817.5h1M650 817.5h1M685 817.5h1M720 817.5h1M790 817.5h1M825 817.5h1M859 817.5h1M894 817.5h1M964 817.5h1M999 817.5h1M1034 817.5h1M1069 817.5h1M1139 817.5h1M1174 817.5h1M1209 817.5h1M1244 817.5h1M1314 817.5h1M1349 817.5h1M1384 817.5h1M1419 817.5h1M1489 817.5h1M1524 817.5h1M1559 817.5h1M1594 817.5h1M1664 817.5h1M1699 817.5h1M1734 817.5h1M20 829.5h1M90 829.5h1M125 829.5h1M160 829.5h1M195 829.5h1M265 829.5h1M300 829.5h1M335 829.5h1M370 829.5h1M440 829.5h1M475 829.5h1M510 829.5h1M545 829.5h1M615 829.5h1M650 829.5h1M685 829.5h1M720 829.5h1M790 829.5h1M825 829.5h1M859 829.5h1M894 829.5h1M964 829.5h1M999 829.5h1M1034 829.5h1M1069 829.5h1M1139 829.5h1M1174 829.5h1M1209 829.5h1M1244 829.5h1M1314 829.5h1M1349 829.5h1M1384 829.5h1M1419 829.5h1M1489 829.5h1M1524 829.5h1M1559 829.5h1M1594 829.5h1M1664 829.5h1M1699 829.5h1M1734 829.5h1M20 840.5h1M90 840.5h1M125 840.5h1M160 840.5h1M195 840.5h1M265 840.5h1M300 840.5h1M335 840.5h1M370 840.5h1M440 840.5h1M475 840.5h1M510 840.5h1M545 840.5h1M615 840.5h1M650 840.5h1M685 840.5h1M720 840.5h1M790 840.5h1M825 840.5h1M859 840.5h1M894 840.5h1M964 840.5h1M999 840.5h1M1034 840.5h1M1069 840.5h1M1139 840.5h1M1174 840.5h1M1209 840.5h1M1244 840.5h1M1314 840.5h1M1349 840.5h1M1384 840.5h1M1419 840.5h1M1489 840.5h1M1524 840.5h1M1559 840.5h1M1594 840.5h1M1664 840.5h1M1699 840.5h1M1734 840.5h1M20 852.5h1M90 852.5h1M125 852.5h1M160 852.5h1M195 852.5h1M265 852.5h1M300 852.5h1M335 852.5h1M370 852.5h1M440 852.5h1M475 852.5h1M510 852.5h1M545 852.5h1M615 852.5h1M650 852.5h1M685 852.5h1M720 852.5h1M790 852.5h1M825 852.5h1M859 852.5h1M894 852.5h1M964 852.5h1M999 852.5h1M1034 852.5h1M1069 852.5h1M1139 852.5h1M1174 852.5h1M1209 852.5h1M1244 852.5h1M1314 852.5h1M1349 852.5h1M1384 852.5h1M1419 852.5h1M1489 852.5h1M1524 852.5h1M1559 852.5h1M1594 852.5h1M1664 852.5h1M1699 852.5h1M1734 852.5h1M20 887.5h1M90 887.5h1M125 887.5h1M160 887.5h1M195 887.5h1M265 887.5h1M300 887.5h1M335 887.5h1M370 887.5h1M440 887.5h1M475 887.5h1M510 887.5h1M545 887.5h1M615 887.5h1M650 887.5h1M685 887.5h1M720 887.5h1M790 887.5h1M825 887.5h1M859 887.5h1M894 887.5h1M964 887.5h1M999 887.5h1M1034 887.5h1M1069 887.5h1M1139 887.5h1M1174 887.5h1M1209 887.5h1M1244 887.5h1M1314 887.5h1M1349 887.5h1M1384 887.5h1M1419 887.5h1M1489 887.5h1M1524 887.5h1M1559 887.5h1M1594 887.5h1M1664 887.5h1M1699 887.5h1M1734 887.5h1M20 899.5h1M90 899.5h1M125 899.5h1M160 899.5h1M195 899.5h1M265 899.5h1M300 899.5h1M335 899.5h1M370 899.5h1M440 899.5h1M475 899.5h1M510 899.5h1M545 899.5h1M615 899.5h1M650 899.5h1M685 899.5h1M720 899.5h1M790 899.5h1M825 899.5h1M859 899.5h1M894 899.5h1M964 899.5h1M999 899.5h1M1034 899.5h1M1069 899.5h1M1139 899.5h1M1174 899.5h1M1209 899.5h1M1244 899.5h1M1314 899.5h1M1349 899.5h1M1384 899.5h1M1419 899.5h1M1489 899.5h1M1524 899.5h1M1559 899.5h1M1594 899.5h1M1664 899.5h1M1699 899.5h1M1734 899.5h1M20 910.5h1M90 910.5h1M125 910.5h1M160 910.5h1M195 910.5h1M265 910.5h1M300 910.5h1M335 910.5h1M370 910.5h1M440 910.5h1M475 910.5h1M510 910.5h1M545 910.5h1M615 910.5h1M650 910.5h1M685 910.5h1M720 910.5h1M790 910.5h1M825 910.5h1M859 910.5h1M894 910.5h1M964 910.5h1M999 910.5h1M1034 910.5h1M1069 910.5h1M1139 910.5h1M1174 910.5h1M1209 910.5h1M1244 910.5h1M1314 910.5h1M1349 910.5h1M1384 910.5h1M1419 910.5h1M1489 910.5h1M1524 910.5h1M1559 910.5h1M1594 910.5h1M1664 910.5h1M1699 910.5h1M1734 910.5h1M20 922.5h1M90 922.5h1M125 922.5h1M160 922.5h1M195 922.5h1M265 922.5h1M300 922.5h1M335 922.5h1M370 922.5h1M440 922.5h1M475 922.5h1M510 922.5h1M545 922.5h1M615 922.5h1M650 922.5h1M685 922.5h1M720 922.5h1M790 922.5h1M825 922.5h1M859 922.5h1M894 922.5h1M964 922.5h1M999 922.5h1M1034 922.5h1M1069 922.5h1M1139 922.5h1M1174 922.5h1M1209 922.5h1M1244 922.5h1M1314 922.5h1M1349 922.5h1M1384 922.5h1M1419 922.5h1M1489 922.5h1M1524 922.5h1M1559 922.5h1M1594 922.5h1M1664 922.5h1M1699 922.5h1M1734 922.5h1M20 933.5h1M90 933.5h1M125 933.5h1M160 933.5h1M195 933.5h1M265 933.5h1M300 933.5h1M335 933.5h1M370 933.5h1M440 933.5h1M475 933.5h1M510 933.5h1M545 933.5h1M615 933.5h1M650 933.5h1M685 933.5h1M720 933.5h1M790 933.5h1M825 933.5h1M859 933.5h1M894 933.5h1M964 933.5h1M999 933.5h1M1034 933.5h1M1069 933.5h1M1139 933.5h1M1174 933.5h1M1209 933.5h1M1244 933.5h1M1314 933.5h1M1349 933.5h1M1384 933.5h1M1419 933.5h1M1489 933.5h1M1524 933.5h1M1559 933.5h1M1594 933.5h1M1664 933.5h1M1699 933.5h1M1734 933.5h1M20 945.5h1M90 945.5h1M125 945.5h1M160 945.5h1M195 945.5h1M265 945.5h1M300 945.5h1M335 945.5h1M370 945.5h1M440 945.5h1M475 945.5h1M510 945.5h1M545 945.5h1M615 945.5h1M650 945.5h1M685 945.5h1M720 945.5h1M790 945.5h1M825 945.5h1M859 945.5h1M894 945.5h1M964 945.5h1M999 945.5h1M1034 945.5h1M1069 945.5h1M1139 945.5h1M1174 945.5h1M1209 945.5h1M1244 945.5h1M1314 945.5h1M1349 945.5h1M1384 945.5h1M1419 945.5h1M1489 945.5h1M1524 945.5h1M1559 945.5h1M1594 945.5h1M1664 945.5h1M1699 945.5h1M1734 945.5h1M20 956.5h1M90 956.5h1M125 956.5h1M160 956.5h1M195 956.5h1M265 956.5h1M300 956.5h1M335 956.5h1M370 956.5h1M440 956.5h1M475 956.5h1M510 956.5h1M545 956.5h1M615 956.5h1M650 956.5h1M685 956.5h1M720 956.5h1M790 956.5h1M825 956.5h1M859 956.5h1M894 956.5h1M964 956.5h1M999 956.5h1M1034 956.5h1M1069 956.5h1M1139 956.5h1M1174 956.5h1M1209 956.5h1M1244 956.5h1M1314 956.5h1M1349 956.5h1M1384 956.5h1M1419 956.5h1M1489 956.5h1M1524 956.5h1M1559 956.5h1M1594 956.5h1M1664 956.5h1M1699 956.5h1M1734 956.5h1M20 968.5h1M90 968.5h1M125 968.5h1M160 968.5h1M195 968.5h1M265 968.5h1M300 968.5h1M335 968.5h1M370 968.5h1M440 968.5h1M475 968.5h1M510 968.5h1M545 968.5h1M615 968.5h1M650 968.5h1M685 968.5h1M720 968.5h1M790 968.5h1M825 968.5h1M859 968.5h1M894 968.5h1M964 968.5h1M999 968.5h1M1034 968.5h1M1069 968.5h1M1139 968.5h1M1174 968.5h1M1209 968.5h1M1244 968.5h1M1314 968.5h1M1349 968.5h1M1384 968.5h1M1419 968.5h1M1489 968.5h1M1524 968.5h1M1559 968.5h1M1594 968.5h1M1664 968.5h1M1699 968.5h1M1734 968.5h1M20 991.5h1M90 991.5h1M125 991.5h1M160 991.5h1M195 991.5h1M265 991.5h1M300 991.5h1M335 991.5h1M370 991.5h1M440 991.5h1M475 991.5h1M510 991.5h1M545 991.5h1M615 991.5h1M650 991.5h1M685 991.5h1M720 991.5h1M790 991.5h1M825 991.5h1M859 991.5h1M894 991.5h1M964 991.5h1M999 991.5h1M1034 991.5h1M1069 991.5h1M1139 991.5h1M1174 991.5h1M1209 991.5h1M1244 991.5h1M1314 991.5h1M1349 991.5h1M1384 991.5h1M1419 991.5h1M1489 991.5h1M1524 991.5h1M1559 991.5h1M1594 991.5h1M1664 991.5h1M1699 991.5h1M1734 991.5h1" stroke="#4e4e4e" stroke-width="1" fill="none"/>
<path d="M230.5 57V993 M405.5 57V993 M580.5 57V993 M755.5 57V993 M929.5 57V993 M1104.5 57V993 M1279.5 57V993 M1454.5 57V993 M1629.5 57V993" stroke="#4e4e4e" stroke-width="1" stroke-dasharray="1 1 1 2 1 1 1 1" fill="none"/>
<path d="M55.5 56V993" stroke="#474747" stroke-width="1" stroke-dasharray="5 5" fill="none"/>
<polyline points="3,160.6 54,160.6 55,158 56,162 57,160.6 82.2,161 83,156.7 86,156 94.7,152.8 105.6,148.9 126,145 149.4,141.9 172.8,140 196,138.75 201,138.4 208.75,139.5 221,143.4 243,145 266.5,148.1 340,148.6 357,148.6 357,150.2 359.9,150.2 359.9,148.6 363.9,148.6 363.9,147.8 365.3,147.8 365.3,148.6 368.3,148.6 368.3,149.6 371.0,149.6 371.0,148.6 376.0,148.6 376.0,147.4 377.7,147.4 377.7,148.6 393.7,148.5 393.7,146.9 394.6,146.9 394.6,148.5 404.6,148.5 404.6,150.0 405.8,150.0 405.8,148.5 409.8,148.5 409.8,149.4 412.4,149.4 412.4,148.5 420,148.5 467,147.9 467,148.9 470.1,148.9 470.1,147.9 486.1,147.7 486.1,148.8 487.7,148.8 487.7,147.7 489.7,147.6 489.7,148.7 492.3,148.7 492.3,147.6 500,147.5 506,147.4 506,146.3 507.9,146.3 507.9,147.4 510.9,147.4 510.9,146.2 514.1,146.2 514.1,147.4 545,147 554,147.1 554,145.9 555.5,145.9 555.5,147.1 562.5,147.3 562.5,148.1 565.3,148.1 565.3,147.3 586.3,147.6 586.3,146.0 588.0,146.0 588.0,147.6 600,147.8 605,147.8 605,146.5 606.7,146.5 606.7,147.8 631.7,148.0 631.7,147.0 633.6,147.0 633.6,148.0 676.6,148.3 676.6,147.2 677.5,147.2 677.5,148.3 700,148.5 715,148.7 715,149.4 718.9,149.4 718.9,148.7 744.9,148.9 744.9,148.1 745.7,148.1 745.7,148.9 758.7,149.1 758.7,150.6 761.5,150.6 761.5,149.1 800,149.5 808,149.5 808,150.4 809.4,150.4 809.4,149.5 825.4,149.6 825.4,148.1 826.8,148.1 826.8,149.6 834.8,149.7 834.8,148.2 837.8,148.2 837.8,149.7 862.8,149.8 862.8,151.5 866.5,151.5 866.5,149.8 868.5,149.8 868.5,151.5 871.4,151.5 871.4,149.8 883.4,149.9 883.4,148.5 885.1,148.5 885.1,149.9 888.1,149.9 888.1,148.6 888.9,148.6 888.9,149.9 900,150 925,149.7 925,148.4 927.8,148.4 927.8,149.7 931.8,149.6 931.8,151.0 932.8,151.0 932.8,149.6 953.8,149.3 953.8,148.5 956.0,148.5 956.0,149.3 985.0,148.9 985.0,148.2 986.6,148.2 986.6,148.9 988.6,148.8 988.6,148.0 991.2,148.0 991.2,148.8 1000,148.7 1012.8,149.8 1013.6,158.1 1013.9,141.4 1015,127 1015.6,113.7 1016.7,107.6 1017.8,108.1 1019.4,117.6 1022.2,122.6 1024.4,132.6 1026.7,137.6 1031.1,139.8 1034.4,143.1 1038.9,142.6 1042.2,145.3 1045.6,139.8 1048.3,135.3 1049.4,145.9 1050.6,130.3 1052.2,122.6 1054.4,103.7 1055.6,95.9 1057.8,87 1060.6,82.6 1063.3,74.8 1066.1,71.4 1067.2,64.8 1071.1,67 1073.5,69.5 1076.7,74.8 1080,82 1083.3,90.3 1088,99.5 1094.4,112.6 1099,120.5 1104.4,129.2 1110,135.8 1115,140.6 1120,145.3 1128,149.3 1138.9,152.6 1150,154.4 1166.7,155.9 1200,156.4 1370,156.5 1371,158 1440,158 1753,158" fill="none" stroke="#111111" stroke-width="1.6" stroke-linejoin="round"/>
<polyline points="3,220 55.5,220 56,189 56.4,262.5 56.8,244 57,220 57.5,207 59,212 61,216 63,219.5 64,220.5 82,222.2 82,222.2 83,214 84,238 85,215 86,230 86.5,222 87,216 87.7,228 88.3,222 89,216 89.6,228 90.3,222 92,218.5 92.6,228 93.3,222 96,222.4 96,222.4 102,222.5 102,223.5 103.1,223.5 103.1,222.5 107.1,222.5 107.1,223.1 110.9,223.1 110.9,222.5 132.9,222.9 132.9,221.8 133.9,221.8 133.9,222.9 137.9,222.9 137.9,223.9 141.4,223.9 141.4,222.9 144.4,223.0 144.4,222.0 145.8,222.0 145.8,223.0 147.8,223.1 147.8,222.5 151.6,222.5 151.6,223.1 164.6,223.3 164.6,224.1 167.3,224.1 167.3,223.3 178.3,223.4 178.3,224.5 180.8,224.5 180.8,223.4 194.8,223.7 194.8,223.0 197.0,223.0 197.0,223.7 204.0,223.8 204.0,224.6 207.1,224.6 207.1,223.8 228.1,224.1 228.1,223.3 231.4,223.3 231.4,224.1 234.4,224.2 234.4,224.8 236.7,224.8 236.7,224.2 291.7,224.9 291.7,223.9 293.3,223.9 293.3,224.9 300,225 303,225.1 303,224.2 306.0,224.2 306.0,225.1 317.0,225.3 317.0,224.6 320.3,224.6 320.3,225.3 322.3,225.4 322.3,226.2 326.2,226.2 326.2,225.4 352.2,225.9 352.2,225.1 354.3,225.1 354.3,225.9 363.3,226.1 363.3,225.0 366.7,225.0 366.7,226.1 406.7,226.8 406.7,227.6 410.2,227.6 410.2,226.8 420.2,227.0 420.2,227.5 421.5,227.5 421.5,227.0 441.5,227.4 441.5,226.7 444.0,226.7 444.0,227.4 473.0,227.9 473.0,226.8 476.1,226.8 476.1,227.9 480,228 512,228.6 512,229.6 513.6,229.6 513.6,228.6 529.6,228.9 529.6,229.5 531.7,229.5 531.7,228.9 555.7,229.4 555.7,230.5 557.7,230.5 557.7,229.4 563.7,229.5 563.7,229.0 565.2,229.0 565.2,229.5 623.2,230.6 623.2,231.5 625.2,231.5 625.2,230.6 663.2,231.3 663.2,232.1 665.9,232.1 665.9,231.3 700,232 711,232.2 711,233.2 713.2,233.2 713.2,232.2 754.2,233.0 754.2,234.1 757.1,234.1 757.1,233.0 762.1,233.2 762.1,233.8 764.8,233.8 764.8,233.2 796.8,233.9 796.8,234.9 799.9,234.9 799.9,233.9 807.9,234.1 807.9,233.1 809.4,233.1 809.4,234.1 814.4,234.2 814.4,233.2 817.8,233.2 817.8,234.2 845.8,234.8 845.8,235.9 848.5,235.9 848.5,234.8 894.5,235.7 894.5,235.0 898.1,235.0 898.1,235.7 907.1,236.0 907.1,236.6 910.2,236.6 910.2,236.0 914.2,236.1 914.2,236.9 915.1,236.9 915.1,236.1 931.1,236.4 931.1,237.2 933.1,237.2 933.1,236.4 942.1,236.7 942.1,236.0 946.0,236.0 946.0,236.7 960,237 994,238.7 994,237.9 997.2,237.9 997.2,238.7 1000,239 1012.5,239.5 1012.5,237.0 1013.1,242.2 1013.7,234.6 1014.3,244.6 1014.9,232.2 1015.5,247.71 1016.1,228.96 1016.7,251.8 1017.3,229.47 1017.9,246.45 1018.5,233.2 1019.1,243.8 1019.7,236.08 1020.3,241.4 1021,239.8 1024.2,240 1024.55,233 1024.9,243.4 1025.25,240 1035.3,240 1035.6499999999999,235 1036.0,243.5 1036.35,240 1041,240 1042,237.5 1043,240 1048.8,240.2 1049,240 1049.35,236 1049.7,243 1050.05,240 1053.2,240 1053.55,232 1053.9,243 1054.25,240 1055,240 1055.35,235 1055.7,245 1056.05,240 1057,240 1057.35,222.9 1057.7,262.9 1058.05,240 1058.2,229.0 1058.8,250.78 1059.4,227.96 1060.0,252.35 1060.6,227.35 1061.2,250.55 1061.8,231.55 1062.4,246.35 1063.8,240 1064.1499999999999,235 1064.5,245 1064.85,240 1069.2,240.5 1069.55,231 1069.9,243 1070.25,240.5 1070.5,240.7 1125,240.7 1126,241.2 1131,241.2 1131,234 1131.5,244.5 1132.0,234 1132.5,244.5 1133.0,234 1133.5,244.5 1134,241.2 1158,241.2 1159,242.3 1159,242.3 1177,242.6 1177,243.5 1178.1,243.5 1178.1,242.6 1222.1,243.5 1222.1,244.4 1223.0,244.4 1223.0,243.5 1258.0,244.1 1258.0,245.0 1260.9,245.0 1260.9,244.1 1272.9,244.4 1272.9,245.0 1275.3,245.0 1275.3,244.4 1282.3,244.6 1282.3,243.7 1283.9,243.7 1283.9,244.6 1294.9,244.8 1294.9,245.5 1295.9,245.5 1295.9,244.8 1358.9,246.0 1358.9,246.9 1362.9,246.9 1362.9,246.0 1378.9,246.4 1378.9,245.7 1380.6,245.7 1380.6,246.4 1398.6,246.7 1398.6,246.0 1401.0,246.0 1401.0,246.7 1404.0,246.8 1404.0,246.2 1407.6,246.2 1407.6,246.8 1417.6,247.1 1417.6,246.5 1420.4,246.5 1420.4,247.1 1427.4,247.3 1427.4,246.7 1429.9,246.7 1429.9,247.3 1431.9,247.4 1431.9,248.3 1435.6,248.3 1435.6,247.4 1440,247.5 1447,247.6 1447,248.5 1450.8,248.5 1450.8,247.6 1509.8,248.3 1509.8,247.8 1511.3,247.8 1511.3,248.3 1556.3,248.8 1556.3,249.3 1557.4,249.3 1557.4,248.8 1564.4,248.9 1564.4,248.3 1565.7,248.3 1565.7,248.9 1568.7,248.9 1568.7,249.5 1570.6,249.5 1570.6,248.9 1605.6,249.4 1605.6,249.8 1607.3,249.8 1607.3,249.4 1625.3,249.6 1625.3,248.9 1628.4,248.9 1628.4,249.6 1651.4,249.9 1651.4,249.3 1654.6,249.3 1654.6,249.9 1661.6,250.0 1661.6,249.4 1664.6,249.4 1664.6,250.0 1679.6,250.2 1679.6,249.4 1683.2,249.4 1683.2,250.2 1719.2,250.6 1719.2,250.0 1720.8,250.0 1720.8,250.6 1753,251" fill="none" stroke="#1ec2cc" stroke-width="1.5" stroke-linejoin="round"/>
<polyline points="3,350 55,350 55,310.0 55.5,378.13 56.0,302.2 56.5,394.4 57.0,300.53 57.5,388.13 58.0,305.0 58.5,375.0 59.0,335.0 59.5,350 80,351 80,350.0 80.7,357.15 81.4,350.0 82.1,366.54 82.8,350.0 83.5,364.35 84.2,350.0 84.9,362.16 85.6,350.0 86.3,356.15 87,351 255,351 260,351.3 268,351.3 268,352.4 269.6,352.4 269.6,351.3 271.6,351.3 271.6,350.7 273.9,350.7 273.9,351.3 278.9,351.3 278.9,350.5 280.3,350.5 280.3,351.3 285.3,351.3 285.3,351.9 286.1,351.9 286.1,351.3 304.1,351.3 304.1,350.6 305.9,350.6 305.9,351.3 311.9,351.3 311.9,352.4 314.3,352.4 314.3,351.3 319.3,351.3 319.3,350.1 321.2,350.1 321.2,351.3 332.2,351.3 332.2,350.1 336.0,350.1 336.0,351.3 342.0,351.3 342.0,352.5 343.0,352.5 343.0,351.3 346.0,351.3 346.0,352.2 347.9,352.2 347.9,351.3 349.9,351.3 349.9,352.5 352.5,352.5 352.5,351.3 356.5,351.3 356.5,350.3 359.6,350.3 359.6,351.3 364.6,351.3 364.6,351.9 367.7,351.9 367.7,351.3 372.7,351.3 372.7,350.2 374.6,350.2 374.6,351.3 379.6,351.3 379.6,351.9 381.8,351.9 381.8,351.3 383.8,351.3 383.8,352.1 386.1,352.1 386.1,351.3 397.1,351.3 397.1,352.4 399.6,352.4 399.6,351.3 401.6,351.3 401.6,352.5 402.9,352.5 402.9,351.3 408.9,351.3 408.9,352.3 411.9,352.3 411.9,351.3 424.9,351.3 424.9,352.1 426.5,352.1 426.5,351.3 437.5,351.3 437.5,352.5 441.4,352.5 441.4,351.3 445.4,351.3 445.4,352.5 447.7,352.5 447.7,351.3 452.7,351.3 452.7,352.1 455.3,352.1 455.3,351.3 469.3,351.3 469.3,350.7 473.2,350.7 473.2,351.3 480.2,351.3 480.2,350.6 483.9,350.6 483.9,351.3 485.9,351.3 485.9,352.5 489.4,352.5 489.4,351.3 502.4,351.3 502.4,352.4 505.3,352.4 505.3,351.3 508.3,351.3 508.3,352.2 512.1,352.2 512.1,351.3 518.1,351.3 518.1,350.5 521.9,350.5 521.9,351.3 534.9,351.3 534.9,352.4 536.6,352.4 536.6,351.3 539.6,351.3 539.6,352.2 541.3,352.2 541.3,351.3 544.3,351.3 544.3,352.0 545.3,352.0 545.3,351.3 547.3,351.3 547.3,351.8 549.8,351.8 549.8,351.3 556.8,351.3 556.8,352.1 559.5,352.1 559.5,351.3 565.5,351.3 565.5,350.5 568.0,350.5 568.0,351.3 577.0,351.3 577.0,352.2 580.0,352.2 580.0,351.3 582.0,351.3 582.0,350.7 585.3,350.7 585.3,351.3 600,351.3 603,351.3 603,350.3 605.2,350.3 605.2,351.3 610.2,351.3 610.2,352.3 613.8,352.3 613.8,351.3 619.8,351.3 619.8,350.6 620.9,350.6 620.9,351.3 622.9,351.3 622.9,350.5 625.1,350.5 625.1,351.3 627.1,351.3 627.1,352.4 628.0,352.4 628.0,351.3 635.0,351.3 635.0,352.4 637.2,352.4 637.2,351.3 642.2,351.3 642.2,350.8 643.4,350.8 643.4,351.3 646.4,351.3 646.4,350.4 647.6,350.4 647.6,351.3 651.6,351.3 651.6,350.6 654.3,350.6 654.3,351.3 659.3,351.3 659.3,352.0 662.1,352.0 662.1,351.3 673.1,351.3 673.1,350.2 675.4,350.2 675.4,351.3 678.4,351.4 678.4,350.3 679.4,350.3 679.4,351.4 682.4,351.4 682.4,350.5 684.7,350.5 684.7,351.4 689.7,351.4 689.7,350.4 691.7,350.4 691.7,351.4 698.7,351.4 698.7,352.5 700.0,352.5 700.0,351.4 709.0,351.4 709.0,352.4 712.3,352.4 712.3,351.4 721.3,351.4 721.3,350.7 722.8,350.7 722.8,351.4 736.8,351.4 736.8,352.6 739.1,352.6 739.1,351.4 742.1,351.4 742.1,350.3 745.0,350.3 745.0,351.4 747.0,351.4 747.0,350.6 750.2,350.6 750.2,351.4 753.2,351.4 753.2,350.4 755.5,350.4 755.5,351.4 758.5,351.4 758.5,352.2 761.5,352.2 761.5,351.4 764.5,351.4 764.5,350.4 767.1,350.4 767.1,351.4 776.1,351.4 776.1,352.1 777.7,352.1 777.7,351.4 784.7,351.4 784.7,350.6 787.7,350.6 787.7,351.4 789.7,351.4 789.7,350.5 793.6,350.5 793.6,351.4 797.6,351.4 797.6,350.7 801.0,350.7 801.0,351.4 803.0,351.4 803.0,352.0 804.6,352.0 804.6,351.4 806.6,351.4 806.6,352.5 807.5,352.5 807.5,351.4 821.5,351.4 821.5,350.5 825.1,350.5 825.1,351.4 828.1,351.5 828.1,352.3 830.7,352.3 830.7,351.5 840.7,351.5 840.7,352.3 844.0,352.3 844.0,351.5 848.0,351.5 848.0,350.6 851.0,350.6 851.0,351.5 863.0,351.5 863.0,352.3 866.3,352.3 866.3,351.5 868.3,351.5 868.3,352.5 871.5,352.5 871.5,351.5 883.5,351.5 883.5,350.7 884.8,350.7 884.8,351.5 888.8,351.5 888.8,350.9 889.7,350.9 889.7,351.5 891.7,351.5 891.7,352.3 893.4,352.3 893.4,351.5 896.4,351.5 896.4,352.1 897.8,352.1 897.8,351.5 900,351.5 903,351.5 903,350.4 904.1,350.4 904.1,351.5 907.1,351.5 907.1,350.6 910.9,350.6 910.9,351.5 913.9,351.4 913.9,352.3 915.4,352.3 915.4,351.4 918.4,351.4 918.4,350.3 922.2,350.3 922.2,351.4 927.2,351.3 927.2,352.4 928.7,352.4 928.7,351.3 930.7,351.3 930.7,350.4 934.3,350.4 934.3,351.3 951.3,351.2 951.3,350.3 952.2,350.3 952.2,351.2 954.2,351.2 954.2,350.1 955.9,350.1 955.9,351.2 963.9,351.1 963.9,350.3 964.8,350.3 964.8,351.1 971.8,351.1 971.8,352.0 974.2,352.0 974.2,351.1 983.2,351.0 983.2,349.9 985.1,349.9 985.1,351.0 991.1,350.9 991.1,349.8 993.9,349.8 993.9,350.9 999.9,350.9 999.9,350.3 1003.1,350.3 1003.1,350.9 1012.8,350.8 1012.8,330.0 1013.5,366.0 1014.2,323.68 1014.9,364.6 1015.6,317.36 1016.3,363.2 1017.0,315.53 1017.7,360.6 1018.4,323.38 1019.1,358.31 1019.8,335.23 1020.5,356.15 1020.6,342 1024.4,345.6 1028.9,347.8 1033.3,349.4 1038,349 1046.7,347.8 1049,342.0 1049.7,355.13 1050.4,338.27 1051.1,351.4 1051.8,334.53 1052.5,348.37 1053.2,332.5 1053.9,346.62 1054.6,330.75 1055.3,344.87 1056.0,329.0 1056.7,342.95 1057.4,326.76 1058.1,340.85 1058.8,324.52 1059.5,338.75 1060.2,322.28 1060.9,336.65 1061.6,320.04 1062.3,334.75 1063.0,318.89 1063.7,333.6 1064.4,318.17 1065.1,332.44 1065.8,317.45 1066.5,331.29 1067.2,316.73 1067.9,330.14 1068.6,316.01 1069.3,328.98 1070.0,316.67 1070.7,327.49 1071.4,319.16 1072.1,325.97 1072.8,321.64 1076.7,322.8 1092.2,328.3 1104.4,333.9 1120,343.3 1131,345.6 1131,343.0 1131.5,349.9 1132.0,341.67 1132.5,351.7 1133.0,341.8 1133.5,349.82 1134.0,343.4 1134.5,347.94 1135.0,345.0 1135,346 1144.4,347.8 1161.1,348.3 1170,349.8 1753,349.8" fill="none" stroke="#e3214c" stroke-width="1.5" stroke-linejoin="round"/>
<polyline points="3,477.5 210,477.5 210,476.5 214,476.5 214,475.5 219,475.5 219,474.5 223,474.5 223,473.5 228,473.5 228,472.5 232,472.5 232,471.5 236,471.5 236,470.5 240,470.5 240,469.5 243,469.5 243,468.5 247,468.5 247,467.5 252,467.5 252,466.5 257,466.5 257,465.5 262,465.5 262,464.5 307,464.5 307,465.5 345,465.5 345,466.5 1014,466.5 1014,464.5 1015,464.5 1015,463.5 1016,463.5 1016,462.5 1017,462.5 1017,461.5 1021,461.5 1021,462.5 1026,462.5 1026,463.5 1047,463.5 1047,462.5 1052,462.5 1052,461.5 1055,461.5 1055,460.5 1065,460.5 1065,461.5 1068,461.5 1068,462.5 1070,462.5 1070,463.5 1072,463.5 1072,464.5 1074,464.5 1074,465.5 1076,465.5 1076,466.5 1079,466.5 1079,467.5 1082,467.5 1082,468.5 1085,468.5 1085,469.5 1088,469.5 1088,470.5 1093,470.5 1093,471.5 1097,471.5 1097,472.5 1103,472.5 1103,473.5 1109,473.5 1109,474.5 1118,474.5 1118,475.5 1133,475.5 1133,476.5 1172,476.5 1172,477.5 1753,477.5" fill="none" stroke="#7dc42c" stroke-width="1.4" stroke-linejoin="round"/>
<polyline points="42,583.5 1753,583.5" fill="none" stroke="#f39325" stroke-width="1.1" stroke-linejoin="round"/>
<polyline points="3,745.5 55.5,745.5 55.5,654.2 83.3,654.2 84.2,641 88.3,641 89.6,648.3 91.7,651.7 92.5,645 93.3,654.2 155.5,654.2 156,650 156.5,654.2 1014.5,654.2 1015.6,641 1023.4,641 1025,645 1026.6,651.6 1027.3,654.2 1034.6,654.2 1035.2,649.3 1035.8,654.2 1053,654.2 1053.5,645.4 1054.3,654.2 1057,654.2 1057.4,641 1064,641 1065.5,648 1067.2,654.2 1068.3,654.2 1068.75,645.4 1069.5,650 1071,654.2 1131,654.2 1131.6,647.3 1132.6,654.2 1753,654.2" fill="none" stroke="#1a1aa6" stroke-width="1.5" stroke-linejoin="round"/>
<polyline points="42,863.5 43,863.5 43,862.5 56,862.5 56,861.5 62,861.5 62,860.5 68,860.5 68,859.5 74,859.5 74,858.5 80,858.5 80,857.5 86,857.5 86,856.5 93,856.5 93,855.5 101,855.5 101,854.5 110,854.5 110,853.5 119,853.5 119,852.5 128,852.5 128,851.5 137,851.5 137,850.5 146,850.5 146,849.5 155,849.5 155,848.5 164,848.5 164,847.5 173,847.5 173,846.5 182,846.5 182,845.5 190,845.5 190,844.5 199,844.5 199,843.5 208,843.5 208,842.5 217,842.5 217,841.5 226,841.5 226,840.5 235,840.5 235,839.5 244,839.5 244,838.5 252,838.5 252,837.5 261,837.5 261,836.5 270,836.5 270,835.5 278,835.5 278,834.5 287,834.5 287,833.5 296,833.5 296,832.5 305,832.5 305,831.5 313,831.5 313,830.5 322,830.5 322,829.5 331,829.5 331,828.5 339,828.5 339,827.5 348,827.5 348,826.5 357,826.5 357,825.5 366,825.5 366,824.5 374,824.5 374,823.5 383,823.5 383,822.5 392,822.5 392,821.5 401,821.5 401,820.5 412,820.5 412,819.5 423,819.5 423,818.5 434,818.5 434,817.5 445,817.5 445,816.5 456,816.5 456,815.5 467,815.5 467,814.5 478,814.5 478,813.5 489,813.5 489,812.5 500,812.5 500,811.5 511,811.5 511,810.5 522,810.5 522,809.5 533,809.5 533,808.5 544,808.5 544,807.5 555,807.5 555,806.5 566,806.5 566,805.5 577,805.5 577,804.5 590,804.5 590,803.5 603,803.5 603,802.5 616,802.5 616,801.5 629,801.5 629,800.5 642,800.5 642,799.5 655,799.5 655,798.5 668,798.5 668,797.5 681,797.5 681,796.5 694,796.5 694,795.5 707,795.5 707,794.5 720,794.5 720,793.5 733,793.5 733,792.5 746,792.5 746,791.5 760,791.5 760,790.5 777,790.5 777,789.5 795,789.5 795,788.5 812,788.5 812,787.5 830,787.5 830,786.5 847,786.5 847,785.5 865,785.5 865,784.5 882,784.5 882,783.5 900,783.5 900,782.5 917,782.5 917,781.5 936,781.5 936,780.5 957,780.5 957,779.5 979,779.5 979,778.5 1001,778.5 1001,777.5 1027,777.5 1027,776.5 1053,776.5 1053,775.5 1079,775.5 1079,774.5 1106,774.5 1106,773.5 1164,773.5 1164,772.5 1222,772.5 1222,771.5 1281,771.5 1281,770.5 1470,770.5 1470,771.5 1528,771.5 1528,772.5 1576,772.5 1576,773.5 1612,773.5 1612,774.5 1659,774.5 1659,775.5 1751,775.5 1751,776.5 1751,776.5" fill="none" stroke="#ee8a1e" stroke-width="1.3" stroke-linejoin="round"/>
<polyline points="42,978.5 205,978.5 230,974.5 405,948.75 480,939 580,930 755,913 930,897 960,895 990,892.5 1012.5,891.25 1013.75,887.5 1016.25,917 1020,909 1025,903.75 1035,901.25 1047.5,901.25 1050,905 1053.75,917.5 1057.5,937.5 1061,948 1065,956.25 1071.25,968.75 1080,972.5 1090,973.75 1105,976.25 1125,978.75 1370,978 1373.75,976.25 1382.5,977 1440,977 1751,976" fill="none" stroke="#7b2496" stroke-width="1.4" stroke-linejoin="round"/>
<path d="M3 161.5H1718 M3 246.5H1740 M3 350.5H1720 M3 478.5H1740 M3 583.5H1720 M3 863.5H1718 M3 979.5H1718" stroke="#474747" stroke-width="1" stroke-dasharray="5 5" fill="none"/>
<rect x="3" y="173" width="1750" height="2" fill="#545454"/><rect x="3" y="290" width="1750" height="2" fill="#545454"/><rect x="3" y="407" width="1750" height="2" fill="#545454"/><rect x="3" y="524" width="1750" height="2" fill="#545454"/><rect x="3" y="641" width="1750" height="2" fill="#545454"/><rect x="3" y="758" width="1750" height="2" fill="#545454"/><rect x="3" y="875" width="1750" height="2" fill="#545454"/>
<path d="M45 57.5H66L55.5 68Z" fill="#f28c28"/>
<path d="M45.5 643.5H65V663.5H59.5L55.5 670.5L51.5 663.5H45.5Z" fill="#f28c28"/>
<path d="M47.5 645.5H63V661.5H58.5L55.5 665.5L52.5 661.5H47.5Z" fill="#000"/>
<path d="M50.5 648H60.5V650.8H56.8V659.5H54.2V650.8H50.5Z" fill="#f28c28"/>
<path d="M55.5 670.5V687" stroke="#1a1aa6" stroke-width="1.2"/>
<path d="M9.5 102.5H77L84 115.5L77 128.5H9.5Q6.5 128.5 6.5 125.5V105.5Q6.5 102.5 9.5 102.5Z" fill="#e6e6e6"/>
<path d="M9.5 102.5H33V128.5H9.5Q6.5 128.5 6.5 125.5V105.5Q6.5 102.5 9.5 102.5Z" fill="#e6e6e6"/>
<path d="M9.5 102.5H77L84 115.5L77 128.5H9.5Q6.5 128.5 6.5 125.5V105.5Q6.5 102.5 9.5 102.5Z" fill="none" stroke="#222" stroke-width="2" stroke-linejoin="round"/>
<path d="M33 102.5V128.5" stroke="#222" stroke-width="2"/>
<text x="10.8" y="119.8" font-size="12.5" fill="#111" textLength="16" lengthAdjust="spacingAndGlyphs">C 1</text>
<text x="58" y="119.8" font-size="12.5" fill="#111" text-anchor="middle">20 V</text>
<text x="100.8" y="121.7" font-size="20" fill="#111">U</text>
<text x="124.6" y="121.7" font-size="20" fill="#111" textLength="76.60000000000001" lengthAdjust="spacingAndGlyphs">loop,coil</text>
<rect x="115" y="122.5" width="9.200000000000003" height="1.25" fill="#111"/>
<path d="M9.5 219.5H77L84 232L77 244.5H9.5Q6.5 244.5 6.5 241.5V222.5Q6.5 219.5 9.5 219.5Z" fill="#e4f6f7"/>
<path d="M9.5 219.5H33V244.5H9.5Q6.5 244.5 6.5 241.5V222.5Q6.5 219.5 9.5 219.5Z" fill="#e4f6f7"/>
<path d="M9.5 219.5H77L84 232L77 244.5H9.5Q6.5 244.5 6.5 241.5V222.5Q6.5 219.5 9.5 219.5Z" fill="none" stroke="#22c4cc" stroke-width="2" stroke-linejoin="round"/>
<path d="M33 219.5V244.5" stroke="#22c4cc" stroke-width="2"/>
<text x="10.8" y="236.3" font-size="12.5" fill="#111" textLength="16" lengthAdjust="spacingAndGlyphs">C 2</text>
<text x="58" y="236.3" font-size="12.5" fill="#111" text-anchor="middle">300 mV</text>
<text x="101.6" y="239.10000000000002" font-size="19.5" fill="#000" fill-opacity="0.8">U</text>
<text x="125.0" y="239.10000000000002" font-size="19.5" fill="#000" textLength="55.0" lengthAdjust="spacingAndGlyphs" fill-opacity="0.8">Bt,coil</text>
<rect x="115.8" y="240.0" width="9.200000000000003" height="1.6000000000000227" fill="#000" fill-opacity="0.8"/>
<text x="100.8" y="238.3" font-size="19.5" fill="#1ec2cc">U</text>
<text x="124.2" y="238.3" font-size="19.5" fill="#1ec2cc" textLength="55.0" lengthAdjust="spacingAndGlyphs">Bt,coil</text>
<rect x="115" y="239.2" width="9.200000000000003" height="1.6000000000000227" fill="#1ec2cc"/>
<path d="M10 337.5H30L42 350L30 362.5H10Q6.5 362.5 6.5 359.0V341.0Q6.5 337.5 10 337.5Z" fill="#fde9ee" stroke="#e8587a" stroke-width="1.5" stroke-linejoin="round"/>
<text x="15" y="354.3" font-size="12.5" fill="#e8587a" textLength="16" lengthAdjust="spacingAndGlyphs">C 3</text>
<text x="54.2" y="355.8" font-size="19" fill="#000" fill-opacity="0.8">U</text>
<text x="77.1" y="355.8" font-size="19" fill="#000" textLength="69.9" lengthAdjust="spacingAndGlyphs" fill-opacity="0.8">Rog,coil</text>
<rect x="67.8" y="357.05" width="8.799999999999997" height="1.6499999999999773" fill="#000" fill-opacity="0.8"/>
<text x="53.4" y="355" font-size="19" fill="#e3214c">U</text>
<text x="76.3" y="355" font-size="19" fill="#e3214c" textLength="69.9" lengthAdjust="spacingAndGlyphs">Rog,coil</text>
<rect x="67" y="356.25" width="8.799999999999997" height="1.6499999999999773" fill="#e3214c"/>
<path d="M9.5 453.25H77L84 466.25L77 479.25H9.5Q6.5 479.25 6.5 476.25V456.25Q6.5 453.25 9.5 453.25Z" fill="#f0f6e6"/>
<path d="M9.5 453.25H33V479.25H9.5Q6.5 479.25 6.5 476.25V456.25Q6.5 453.25 9.5 453.25Z" fill="#f0f6e6"/>
<path d="M9.5 453.25H77L84 466.25L77 479.25H9.5Q6.5 479.25 6.5 476.25V456.25Q6.5 453.25 9.5 453.25Z" fill="none" stroke="#7cc830" stroke-width="2" stroke-linejoin="round"/>
<path d="M33 453.25V479.25" stroke="#7cc830" stroke-width="2"/>
<text x="10.8" y="470.55" font-size="12.5" fill="#111" textLength="16" lengthAdjust="spacingAndGlyphs">C 4</text>
<text x="58" y="470.55" font-size="12.5" fill="#111" text-anchor="middle">200 mV</text>
<text x="101.6" y="473.3" font-size="19.5" fill="#000" fill-opacity="0.8">U</text>
<text x="125.0" y="473.3" font-size="19.5" fill="#000" textLength="64.4" lengthAdjust="spacingAndGlyphs" fill-opacity="0.8">Photod</text>
<rect x="115.8" y="473.8" width="9.200000000000003" height="1.6000000000000227" fill="#000" fill-opacity="0.8"/>
<text x="100.8" y="472.5" font-size="19.5" fill="#6ab026">U</text>
<text x="124.2" y="472.5" font-size="19.5" fill="#6ab026" textLength="64.4" lengthAdjust="spacingAndGlyphs">Photod</text>
<rect x="115" y="473" width="9.200000000000003" height="1.6000000000000227" fill="#6ab026"/>
<path d="M10 571.3H30L42 583.8L30 596.3H10Q6.5 596.3 6.5 592.8V574.8Q6.5 571.3 10 571.3Z" fill="#fdf3e8" stroke="#f5a448" stroke-width="1.5" stroke-linejoin="round"/>
<text x="15" y="588.0999999999999" font-size="12.5" fill="#111" textLength="17" lengthAdjust="spacingAndGlyphs">C 5</text>
<text x="54.0" y="590.05" font-size="19" fill="#000" fill-opacity="0.8">U</text>
<text x="77.4" y="590.05" font-size="19" fill="#000" textLength="80.10000000000001" lengthAdjust="spacingAndGlyphs" fill-opacity="0.8">Diamagn</text>
<rect x="67.7" y="591.0999999999999" width="9.0" height="1.6000000000000227" fill="#000" fill-opacity="0.8"/>
<text x="53.2" y="589.25" font-size="19" fill="#ee8c22">U</text>
<text x="76.6" y="589.25" font-size="19" fill="#ee8c22" textLength="80.10000000000001" lengthAdjust="spacingAndGlyphs">Diamagn</text>
<rect x="66.9" y="590.3" width="9.0" height="1.6000000000000227" fill="#ee8c22"/>
<path d="M9.5 687.4H77L84 700.4L77 713.4H9.5Q6.5 713.4 6.5 710.4V690.4Q6.5 687.4 9.5 687.4Z" fill="#e8e8f4"/>
<path d="M9.5 687.4H33V713.4H9.5Q6.5 713.4 6.5 710.4V690.4Q6.5 687.4 9.5 687.4Z" fill="#2a22c0"/>
<path d="M9.5 687.4H77L84 700.4L77 713.4H9.5Q6.5 713.4 6.5 710.4V690.4Q6.5 687.4 9.5 687.4Z" fill="none" stroke="#111" stroke-width="2" stroke-linejoin="round"/>
<path d="M33 687.4V713.4" stroke="#111" stroke-width="2"/>
<text x="10.8" y="704.6999999999999" font-size="12.5" fill="#ffffff" textLength="16" lengthAdjust="spacingAndGlyphs">C 6</text>
<text x="58" y="704.6999999999999" font-size="12.5" fill="#2a22c0" text-anchor="middle">3 V</text>
<text x="101.1" y="707.05" font-size="19.5" fill="#000" textLength="64.9" lengthAdjust="spacingAndGlyphs" fill-opacity="0.8">Trigger</text>
<text x="100.3" y="706.25" font-size="19.5" fill="#2626a8" textLength="64.9" lengthAdjust="spacingAndGlyphs">Trigger</text>
<path d="M10 851.0H30L42 863.5L30 876.0H10Q6.5 876.0 6.5 872.5V854.5Q6.5 851.0 10 851.0Z" fill="#fdf3e8" stroke="#f5a448" stroke-width="1.5" stroke-linejoin="round"/>
<text x="13.3" y="867.8" font-size="12.5" fill="#111" textLength="19.6" lengthAdjust="spacingAndGlyphs">M 1</text>
<text x="54.2" y="863.3" font-size="24.5" fill="#000" fill-opacity="0.8">B</text>
<text x="82.9" y="863.3" font-size="24.5" fill="#000" textLength="11.6" lengthAdjust="spacingAndGlyphs" fill-opacity="0.8">t</text>
<rect x="70.0" y="865.8" width="13.700000000000003" height="2.5" fill="#000" fill-opacity="0.8"/>
<text x="53.4" y="862.5" font-size="24.5" fill="#ee8a1e">B</text>
<text x="82.1" y="862.5" font-size="24.5" fill="#ee8a1e" textLength="11.6" lengthAdjust="spacingAndGlyphs">t</text>
<rect x="69.2" y="865" width="13.700000000000003" height="2.5" fill="#ee8a1e"/>
<path d="M10 966.5H30L42 979L30 991.5H10Q6.5 991.5 6.5 988.0V970.0Q6.5 966.5 10 966.5Z" fill="#f1e8f5" stroke="#8e44aa" stroke-width="1.5" stroke-linejoin="round"/>
<text x="13.3" y="983.3" font-size="12.5" fill="#7b2496" textLength="20.4" lengthAdjust="spacingAndGlyphs">M 2</text>
<text x="54.2" y="983.3" font-size="19" fill="#000" fill-opacity="0.8">I</text>
<text x="69.2" y="983.3" font-size="19" fill="#000" textLength="11.1" lengthAdjust="spacingAndGlyphs" fill-opacity="0.8">p</text>
<rect x="59.099999999999994" y="979.3" width="10.900000000000006" height="2.0" fill="#000" fill-opacity="0.8"/>
<text x="53.4" y="982.5" font-size="19" fill="#7b2496">I</text>
<text x="68.4" y="982.5" font-size="19" fill="#7b2496" textLength="11.1" lengthAdjust="spacingAndGlyphs">p</text>
<rect x="58.3" y="978.5" width="10.900000000000006" height="2.0" fill="#7b2496"/>
<text x="1747.1" y="98.8" font-size="13.5" fill="#000" stroke="#000" stroke-width="0.25" fill-opacity="0.85" text-anchor="end">30 V</text>
<text x="1746.3" y="98" font-size="13.5" fill="#1a1a1a" stroke="#1a1a1a" stroke-width="0.3" text-anchor="end">30 V</text>
<text x="1747.1" y="121.8" font-size="13.5" fill="#000" stroke="#000" stroke-width="0.25" fill-opacity="0.85" text-anchor="end">20 V</text>
<text x="1746.3" y="121" font-size="13.5" fill="#1a1a1a" stroke="#1a1a1a" stroke-width="0.3" text-anchor="end">20 V</text>
<text x="1747.1" y="144.8" font-size="13.5" fill="#000" stroke="#000" stroke-width="0.25" fill-opacity="0.85" text-anchor="end">10 V</text>
<text x="1746.3" y="144" font-size="13.5" fill="#1a1a1a" stroke="#1a1a1a" stroke-width="0.3" text-anchor="end">10 V</text>
<text x="1747.1" y="167.8" font-size="13.5" fill="#000" stroke="#000" stroke-width="0.25" fill-opacity="0.85" text-anchor="end">0 V</text>
<text x="1746.3" y="167" font-size="13.5" fill="#1a1a1a" stroke="#1a1a1a" stroke-width="0.3" text-anchor="end">0 V</text>
<text x="1747.1" y="195.3" font-size="13.5" fill="#000" stroke="#000" stroke-width="0.25" fill-opacity="0.85" text-anchor="end">1.25 V</text>
<text x="1746.3" y="194.5" font-size="13.5" fill="#1fb6c2" stroke="#1fb6c2" stroke-width="0.3" text-anchor="end">1.25 V</text>
<text x="1747.1" y="218.5" font-size="13.5" fill="#000" stroke="#000" stroke-width="0.25" fill-opacity="0.85" text-anchor="end">750 mV</text>
<text x="1746.3" y="217.7" font-size="13.5" fill="#1fb6c2" stroke="#1fb6c2" stroke-width="0.3" text-anchor="end">750 mV</text>
<text x="1747.1" y="241.5" font-size="13.5" fill="#000" stroke="#000" stroke-width="0.25" fill-opacity="0.85" text-anchor="end">250 mV</text>
<text x="1746.3" y="240.7" font-size="13.5" fill="#1fb6c2" stroke="#1fb6c2" stroke-width="0.3" text-anchor="end">250 mV</text>
<text x="1747.1" y="264.5" font-size="13.5" fill="#000" stroke="#000" stroke-width="0.25" fill-opacity="0.85" text-anchor="end">-250 mV</text>
<text x="1746.3" y="263.7" font-size="13.5" fill="#1fb6c2" stroke="#1fb6c2" stroke-width="0.3" text-anchor="end">-250 mV</text>
<text x="1747.1" y="287.40000000000003" font-size="13.5" fill="#000" stroke="#000" stroke-width="0.25" fill-opacity="0.85" text-anchor="end">-750 mV</text>
<text x="1746.3" y="286.6" font-size="13.5" fill="#1fb6c2" stroke="#1fb6c2" stroke-width="0.3" text-anchor="end">-750 mV</text>
<text x="1747.1" y="309.55" font-size="13.5" fill="#000" stroke="#000" stroke-width="0.25" fill-opacity="0.85" text-anchor="end">1.80 V</text>
<text x="1746.3" y="308.75" font-size="13.5" fill="#d0234a" stroke="#d0234a" stroke-width="0.3" text-anchor="end">1.80 V</text>
<text x="1747.1" y="332.8" font-size="13.5" fill="#000" stroke="#000" stroke-width="0.25" fill-opacity="0.85" text-anchor="end">900 mV</text>
<text x="1746.3" y="332" font-size="13.5" fill="#d0234a" stroke="#d0234a" stroke-width="0.3" text-anchor="end">900 mV</text>
<text x="1747.1" y="355.8" font-size="13.5" fill="#000" stroke="#000" stroke-width="0.25" fill-opacity="0.85" text-anchor="end">0 V</text>
<text x="1746.3" y="355" font-size="13.5" fill="#d0234a" stroke="#d0234a" stroke-width="0.3" text-anchor="end">0 V</text>
<text x="1747.1" y="378.8" font-size="13.5" fill="#000" stroke="#000" stroke-width="0.25" fill-opacity="0.85" text-anchor="end">-900 mV</text>
<text x="1746.3" y="378" font-size="13.5" fill="#d0234a" stroke="#d0234a" stroke-width="0.3" text-anchor="end">-900 mV</text>
<text x="1747.1" y="401.55" font-size="13.5" fill="#000" stroke="#000" stroke-width="0.25" fill-opacity="0.85" text-anchor="end">-1.80 V</text>
<text x="1746.3" y="400.75" font-size="13.5" fill="#d0234a" stroke="#d0234a" stroke-width="0.3" text-anchor="end">-1.80 V</text>
<text x="1747.1" y="426.8" font-size="13.5" fill="#000" stroke="#000" stroke-width="0.25" fill-opacity="0.85" text-anchor="end">1 V</text>
<text x="1746.3" y="426" font-size="13.5" fill="#68a824" stroke="#68a824" stroke-width="0.3" text-anchor="end">1 V</text>
<text x="1747.1" y="449.8" font-size="13.5" fill="#000" stroke="#000" stroke-width="0.25" fill-opacity="0.85" text-anchor="end">600 mV</text>
<text x="1746.3" y="449" font-size="13.5" fill="#68a824" stroke="#68a824" stroke-width="0.3" text-anchor="end">600 mV</text>
<text x="1747.1" y="472.7" font-size="13.5" fill="#000" stroke="#000" stroke-width="0.25" fill-opacity="0.85" text-anchor="end">200 mV</text>
<text x="1746.3" y="471.9" font-size="13.5" fill="#68a824" stroke="#68a824" stroke-width="0.3" text-anchor="end">200 mV</text>
<text x="1747.1" y="495.40000000000003" font-size="13.5" fill="#000" stroke="#000" stroke-width="0.25" fill-opacity="0.85" text-anchor="end">-200 mV</text>
<text x="1746.3" y="494.6" font-size="13.5" fill="#68a824" stroke="#68a824" stroke-width="0.3" text-anchor="end">-200 mV</text>
<text x="1747.1" y="518.4" font-size="13.5" fill="#000" stroke="#000" stroke-width="0.25" fill-opacity="0.85" text-anchor="end">-600 mV</text>
<text x="1746.3" y="517.6" font-size="13.5" fill="#68a824" stroke="#68a824" stroke-width="0.3" text-anchor="end">-600 mV</text>
<text x="1747.1" y="543.8" font-size="13.5" fill="#000" stroke="#000" stroke-width="0.25" fill-opacity="0.85" text-anchor="end">4 V</text>
<text x="1746.3" y="543" font-size="13.5" fill="#ee8c22" stroke="#ee8c22" stroke-width="0.3" text-anchor="end">4 V</text>
<text x="1747.1" y="566.3" font-size="13.5" fill="#000" stroke="#000" stroke-width="0.25" fill-opacity="0.85" text-anchor="end">2 V</text>
<text x="1746.3" y="565.5" font-size="13.5" fill="#ee8c22" stroke="#ee8c22" stroke-width="0.3" text-anchor="end">2 V</text>
<text x="1747.1" y="589.4" font-size="13.5" fill="#000" stroke="#000" stroke-width="0.25" fill-opacity="0.85" text-anchor="end">0 V</text>
<text x="1746.3" y="588.6" font-size="13.5" fill="#ee8c22" stroke="#ee8c22" stroke-width="0.3" text-anchor="end">0 V</text>
<text x="1747.1" y="612.3" font-size="13.5" fill="#000" stroke="#000" stroke-width="0.25" fill-opacity="0.85" text-anchor="end">-2 V</text>
<text x="1746.3" y="611.5" font-size="13.5" fill="#ee8c22" stroke="#ee8c22" stroke-width="0.3" text-anchor="end">-2 V</text>
<text x="1747.1" y="635.3" font-size="13.5" fill="#000" stroke="#000" stroke-width="0.25" fill-opacity="0.85" text-anchor="end">-4 V</text>
<text x="1746.3" y="634.5" font-size="13.5" fill="#ee8c22" stroke="#ee8c22" stroke-width="0.3" text-anchor="end">-4 V</text>
<text x="1747.1" y="660.8" font-size="13.5" fill="#000" stroke="#000" stroke-width="0.25" fill-opacity="0.85" text-anchor="end">6 V</text>
<text x="1746.3" y="660" font-size="13.5" fill="#2424a8" stroke="#2424a8" stroke-width="0.3" text-anchor="end">6 V</text>
<text x="1747.1" y="683.8" font-size="13.5" fill="#000" stroke="#000" stroke-width="0.25" fill-opacity="0.85" text-anchor="end">4.50 V</text>
<text x="1746.3" y="683" font-size="13.5" fill="#2424a8" stroke="#2424a8" stroke-width="0.3" text-anchor="end">4.50 V</text>
<text x="1747.1" y="706.3" font-size="13.5" fill="#000" stroke="#000" stroke-width="0.25" fill-opacity="0.85" text-anchor="end">3 V</text>
<text x="1746.3" y="705.5" font-size="13.5" fill="#2424a8" stroke="#2424a8" stroke-width="0.3" text-anchor="end">3 V</text>
<text x="1747.1" y="729.8" font-size="13.5" fill="#000" stroke="#000" stroke-width="0.25" fill-opacity="0.85" text-anchor="end">1.50 V</text>
<text x="1746.3" y="729" font-size="13.5" fill="#2424a8" stroke="#2424a8" stroke-width="0.3" text-anchor="end">1.50 V</text>
<text x="1747.1" y="752.5999999999999" font-size="13.5" fill="#000" stroke="#000" stroke-width="0.25" fill-opacity="0.85" text-anchor="end">0 V</text>
<text x="1746.3" y="751.8" font-size="13.5" fill="#2424a8" stroke="#2424a8" stroke-width="0.3" text-anchor="end">0 V</text>
<text x="1747.1" y="777.9" font-size="13.5" fill="#000" stroke="#000" stroke-width="0.25" fill-opacity="0.85" text-anchor="end">595.707 mT</text>
<text x="1746.3" y="777.1" font-size="13.5" fill="#ee8a1e" stroke="#ee8a1e" stroke-width="0.3" text-anchor="end">595.707 mT</text>
<text x="1747.1" y="800.8" font-size="13.5" fill="#000" stroke="#000" stroke-width="0.25" fill-opacity="0.85" text-anchor="end">446.780 mT</text>
<text x="1746.3" y="800" font-size="13.5" fill="#ee8a1e" stroke="#ee8a1e" stroke-width="0.3" text-anchor="end">446.780 mT</text>
<text x="1747.1" y="823.8" font-size="13.5" fill="#000" stroke="#000" stroke-width="0.25" fill-opacity="0.85" text-anchor="end">297.853 mT</text>
<text x="1746.3" y="823" font-size="13.5" fill="#ee8a1e" stroke="#ee8a1e" stroke-width="0.3" text-anchor="end">297.853 mT</text>
<text x="1747.1" y="846.8" font-size="13.5" fill="#000" stroke="#000" stroke-width="0.25" fill-opacity="0.85" text-anchor="end">148.927 mT</text>
<text x="1746.3" y="846" font-size="13.5" fill="#ee8a1e" stroke="#ee8a1e" stroke-width="0.3" text-anchor="end">148.927 mT</text>
<text x="1747.1" y="869.6999999999999" font-size="13.5" fill="#000" stroke="#000" stroke-width="0.25" fill-opacity="0.85" text-anchor="end">0 T</text>
<text x="1746.3" y="868.9" font-size="13.5" fill="#ee8a1e" stroke="#ee8a1e" stroke-width="0.3" text-anchor="end">0 T</text>
<text x="1747.1" y="893.8" font-size="13.5" fill="#000" stroke="#000" stroke-width="0.25" fill-opacity="0.85" text-anchor="end">7.778230 kA</text>
<text x="1746.3" y="893" font-size="13.5" fill="#6a2088" stroke="#6a2088" stroke-width="0.3" text-anchor="end">7.778230 kA</text>
<text x="1747.1" y="916.8" font-size="13.5" fill="#000" stroke="#000" stroke-width="0.25" fill-opacity="0.85" text-anchor="end">5.833672 kA</text>
<text x="1746.3" y="916" font-size="13.5" fill="#6a2088" stroke="#6a2088" stroke-width="0.3" text-anchor="end">5.833672 kA</text>
<text x="1747.1" y="939.8" font-size="13.5" fill="#000" stroke="#000" stroke-width="0.25" fill-opacity="0.85" text-anchor="end">3.889115 kA</text>
<text x="1746.3" y="939" font-size="13.5" fill="#6a2088" stroke="#6a2088" stroke-width="0.3" text-anchor="end">3.889115 kA</text>
<text x="1747.1" y="962.8" font-size="13.5" fill="#000" stroke="#000" stroke-width="0.25" fill-opacity="0.85" text-anchor="end">1.944557 kA</text>
<text x="1746.3" y="962" font-size="13.5" fill="#6a2088" stroke="#6a2088" stroke-width="0.3" text-anchor="end">1.944557 kA</text>
<text x="1747.1" y="985.8" font-size="13.5" fill="#000" stroke="#000" stroke-width="0.25" fill-opacity="0.85" text-anchor="end">0 A</text>
<text x="1746.3" y="985" font-size="13.5" fill="#6a2088" stroke="#6a2088" stroke-width="0.3" text-anchor="end">0 A</text>
<rect x="44.55" y="743" width="21.9" height="11" fill="#fff"/>
<text x="56.3" y="753.6" font-size="13.5" fill="#000" stroke="#000" stroke-width="0.25" text-anchor="middle">0 s</text>
<text x="55.5" y="752.8" font-size="13.5" fill="#5a5a5a" stroke="#5a5a5a" stroke-width="0.3" text-anchor="middle">0 s</text>
<rect x="215.9" y="743" width="29.2" height="11" fill="#fff"/>
<text x="231.3" y="753.6" font-size="13.5" fill="#000" stroke="#000" stroke-width="0.25" text-anchor="middle">4 ms</text>
<text x="230.5" y="752.8" font-size="13.5" fill="#5a5a5a" stroke="#5a5a5a" stroke-width="0.3" text-anchor="middle">4 ms</text>
<rect x="390.9" y="743" width="29.2" height="11" fill="#fff"/>
<text x="406.3" y="753.6" font-size="13.5" fill="#000" stroke="#000" stroke-width="0.25" text-anchor="middle">8 ms</text>
<text x="405.5" y="752.8" font-size="13.5" fill="#5a5a5a" stroke="#5a5a5a" stroke-width="0.3" text-anchor="middle">8 ms</text>
<rect x="562.25" y="743" width="36.5" height="11" fill="#fff"/>
<text x="581.3" y="753.6" font-size="13.5" fill="#000" stroke="#000" stroke-width="0.25" text-anchor="middle">12 ms</text>
<text x="580.5" y="752.8" font-size="13.5" fill="#5a5a5a" stroke="#5a5a5a" stroke-width="0.3" text-anchor="middle">12 ms</text>
<rect x="737.25" y="743" width="36.5" height="11" fill="#fff"/>
<text x="756.3" y="753.6" font-size="13.5" fill="#000" stroke="#000" stroke-width="0.25" text-anchor="middle">16 ms</text>
<text x="755.5" y="752.8" font-size="13.5" fill="#5a5a5a" stroke="#5a5a5a" stroke-width="0.3" text-anchor="middle">16 ms</text>
<rect x="911.25" y="743" width="36.5" height="11" fill="#fff"/>
<text x="930.3" y="753.6" font-size="13.5" fill="#000" stroke="#000" stroke-width="0.25" text-anchor="middle">20 ms</text>
<text x="929.5" y="752.8" font-size="13.5" fill="#5a5a5a" stroke="#5a5a5a" stroke-width="0.3" text-anchor="middle">20 ms</text>
<rect x="1086.25" y="743" width="36.5" height="11" fill="#fff"/>
<text x="1105.3" y="753.6" font-size="13.5" fill="#000" stroke="#000" stroke-width="0.25" text-anchor="middle">24 ms</text>
<text x="1104.5" y="752.8" font-size="13.5" fill="#5a5a5a" stroke="#5a5a5a" stroke-width="0.3" text-anchor="middle">24 ms</text>
<rect x="1261.25" y="743" width="36.5" height="11" fill="#fff"/>
<text x="1280.3" y="753.6" font-size="13.5" fill="#000" stroke="#000" stroke-width="0.25" text-anchor="middle">28 ms</text>
<text x="1279.5" y="752.8" font-size="13.5" fill="#5a5a5a" stroke="#5a5a5a" stroke-width="0.3" text-anchor="middle">28 ms</text>
<rect x="1436.25" y="743" width="36.5" height="11" fill="#fff"/>
<text x="1455.3" y="753.6" font-size="13.5" fill="#000" stroke="#000" stroke-width="0.25" text-anchor="middle">32 ms</text>
<text x="1454.5" y="752.8" font-size="13.5" fill="#5a5a5a" stroke="#5a5a5a" stroke-width="0.3" text-anchor="middle">32 ms</text>
<rect x="1611.25" y="743" width="36.5" height="11" fill="#fff"/>
<text x="1630.3" y="753.6" font-size="13.5" fill="#000" stroke="#000" stroke-width="0.25" text-anchor="middle">36 ms</text>
<text x="1629.5" y="752.8" font-size="13.5" fill="#5a5a5a" stroke="#5a5a5a" stroke-width="0.3" text-anchor="middle">36 ms</text>
<path d="M1731 700.3L1742 690.5V697.8H1751V702.8H1742V710.4Z" fill="#2a22c0"/>
<path d="M1711 65H1742Q1745.5 65 1745.5 68.5V96Q1745.5 99 1743 97L1710 66.5Q1709 65 1711 65Z" fill="#4b4b4b" stroke="#111" stroke-width="1"/>
<circle cx="1737" cy="71.8" r="3.9" fill="none" stroke="#a8a8a8" stroke-width="1.6"/>
<path d="M1734.2 74.6L1728 80.8" stroke="#a8a8a8" stroke-width="2" stroke-linecap="round"/>
</g>
<path d="M1769.5 995.5V32Q1769.5 29.5 1772 29.5H1920M1769.5 995.5H1920" fill="none" stroke="#6a645e" stroke-width="1"/>
<path d="M1769.5 995.5V32" fill="none" stroke="#55575b" stroke-width="1"/>
<text x="1786.6" y="25.6" font-size="30.5" font-weight="bold" fill="#ffffff" stroke="#ffffff" stroke-width="0.9" stroke-linejoin="round" textLength="116" lengthAdjust="spacingAndGlyphs">Tektronix</text>
<path d="M1815.2 26H1820.2L1830.6 9.2H1825.6Z" fill="#1fb8d8"/>
<text x="1844.5" y="44" font-size="15" fill="#e8e8e8" text-anchor="middle" font-weight="bold" textLength="83" lengthAdjust="spacingAndGlyphs">Add New...</text>
<rect x="1778.5" y="54.5" width="62" height="36" rx="6" fill="url(#btn)" stroke="#6a625b" stroke-width="1"/>
<rect x="1850.5" y="54.5" width="62" height="36" rx="6" fill="url(#btn)" stroke="#6a625b" stroke-width="1"/>
<rect x="1778.5" y="100.5" width="62" height="36" rx="6" fill="url(#btn)" stroke="#6a625b" stroke-width="1"/>
<rect x="1850.5" y="100.5" width="62" height="36" rx="6" fill="url(#btn)" stroke="#6a625b" stroke-width="1"/>
<rect x="1850.5" y="146.5" width="62" height="36" rx="6" fill="url(#btn)" stroke="#6a625b" stroke-width="1"/>
<rect x="1850.5" y="196.5" width="62" height="36" rx="6" fill="url(#btn)" stroke="#6a625b" stroke-width="1"/>
<rect x="1778.5" y="146.5" width="62" height="36" rx="6" fill="url(#btn)" stroke="#6a625b" stroke-width="1"/>
<rect x="1778.5" y="196.5" width="62" height="36" rx="6" fill="url(#btn)" stroke="#6a625b" stroke-width="1"/>
<text x="1809.5" y="77.2" font-size="15" fill="#f0f0f0" text-anchor="middle" textLength="50" lengthAdjust="spacingAndGlyphs">Cursors</text>
<text x="1881.5" y="77.2" font-size="15" fill="#f0f0f0" text-anchor="middle" textLength="46" lengthAdjust="spacingAndGlyphs">Callout</text>
<text x="1809.5" y="122.8" font-size="15" fill="#f0f0f0" text-anchor="middle" textLength="59" lengthAdjust="spacingAndGlyphs">Measure</text>
<text x="1881.5" y="122.8" font-size="15" fill="#f0f0f0" text-anchor="middle" textLength="46" lengthAdjust="spacingAndGlyphs">Search</text>
<text x="1809.5" y="160.8" font-size="15" fill="#f0f0f0" text-anchor="middle" textLength="47" lengthAdjust="spacingAndGlyphs">Results</text>
<text x="1809.5" y="176.7" font-size="15" fill="#f0f0f0" text-anchor="middle" textLength="36" lengthAdjust="spacingAndGlyphs">Table</text>
<text x="1881.5" y="168.5" font-size="15" fill="#f0f0f0" text-anchor="middle" textLength="28" lengthAdjust="spacingAndGlyphs">Plot</text>
<text x="1881.5" y="218.9" font-size="15" fill="#f0f0f0" text-anchor="middle" textLength="50" lengthAdjust="spacingAndGlyphs">More...</text>
<path d="M1773 190H1917M1773 241.5H1917" stroke="#6a625b" stroke-width="1"/>
<rect x="1798" y="202.8" width="22" height="19" fill="none" stroke="#b0b0b0" stroke-width="1.6" stroke-dasharray="2.5 2"/>
<circle cx="1810.5" cy="209.8" r="4.2" fill="none" stroke="#b0b0b0" stroke-width="1.6"/>
<path d="M1807.5 212.8L1802.5 217.3" stroke="#b0b0b0" stroke-width="2.2" stroke-linecap="round"/>
<path d="M1815 213.5L1823.5 220.5L1820 221L1822 225.5L1820.5 226.3L1818.5 221.8L1816 224Z" fill="#b0b0b0"/>
<circle cx="1762" cy="504" r="1.9" fill="#b8b8b8"/>
<circle cx="1762" cy="512" r="1.9" fill="#b8b8b8"/>
<circle cx="1762" cy="520.5" r="1.9" fill="#b8b8b8"/>
<path d="M1118.5 1000V1078M1269.5 1000V1078M1811.5 1000V1078" stroke="#6a625b" stroke-width="1"/>
<path d="M7 984H89Q93 984 93 988V1074.5Q93 1078.5 89 1078.5H7Q3 1078.5 3 1074.5V988Q3 984 7 984Z" fill="#c8c8c8"/>
<path d="M7 984H89Q93 984 93 988V1003H3V988Q3 984 7 984Z" fill="#1e1e1e"/>
<rect x="3" y="1003" width="90" height="1.5" fill="#a6a6a6"/>
<text x="8.6" y="997.8" font-size="14.5" fill="#e6df2e" textLength="27.6" lengthAdjust="spacingAndGlyphs">Ch 1</text>
<rect x="3" y="1004.5" width="90" height="17.2" fill="#ff0000"/>
<path d="M11 1006L19 1019.5H3Z" fill="#f0e800" stroke="#3a3a6a" stroke-width="0.8" stroke-linejoin="round"/>
<path d="M11 1009.5V1016" stroke="#8a8a40" stroke-width="1.3"/>
<text x="19.7" y="1017" font-size="15" fill="#ffffff" textLength="57" lengthAdjust="spacingAndGlyphs">Clipping</text>
<text x="9" y="1036.8" font-size="14.5" fill="#111" textLength="43" lengthAdjust="spacingAndGlyphs">5 V/div</text>
<text x="9" y="1055.5" font-size="14.5" fill="#111" textLength="35" lengthAdjust="spacingAndGlyphs">1 MΩ</text>
<text x="9" y="1074.8" font-size="14.5" fill="#111" textLength="52" lengthAdjust="spacingAndGlyphs">200 kHz</text>
<text x="75" y="1070" font-size="9" fill="#111">B</text><text x="80.5" y="1073" font-size="9" fill="#111">w</text>
<path d="M102 984H184Q188 984 188 988V1074.5Q188 1078.5 184 1078.5H102Q98 1078.5 98 1074.5V988Q98 984 102 984Z" fill="#c8c8c8"/>
<path d="M102 984H184Q188 984 188 988V1003H98V988Q98 984 102 984Z" fill="#1f4447"/>
<rect x="98" y="1003" width="90" height="1.5" fill="#a6a6a6"/>
<text x="103.6" y="997.8" font-size="14.5" fill="#27c6d0" textLength="27.6" lengthAdjust="spacingAndGlyphs">Ch 2</text>
<rect x="98" y="1004.5" width="90" height="17.2" fill="#ff0000"/>
<path d="M106 1006L114 1019.5H98Z" fill="#f0e800" stroke="#3a3a6a" stroke-width="0.8" stroke-linejoin="round"/>
<path d="M106 1009.5V1016" stroke="#8a8a40" stroke-width="1.3"/>
<text x="114.7" y="1017" font-size="15" fill="#ffffff" textLength="57" lengthAdjust="spacingAndGlyphs">Clipping</text>
<text x="104" y="1036.8" font-size="14.5" fill="#111" textLength="73" lengthAdjust="spacingAndGlyphs">250 mV/div</text>
<text x="104" y="1055.5" font-size="14.5" fill="#111" textLength="35" lengthAdjust="spacingAndGlyphs">1 MΩ</text>
<text x="104" y="1074.8" font-size="14.5" fill="#111" textLength="52" lengthAdjust="spacingAndGlyphs">200 kHz</text>
<text x="170" y="1070" font-size="9" fill="#111">B</text><text x="175.5" y="1073" font-size="9" fill="#111">w</text>
<path d="M197 984H279Q283 984 283 988V1074.5Q283 1078.5 279 1078.5H197Q193 1078.5 193 1074.5V988Q193 984 197 984Z" fill="#c8c8c8"/>
<path d="M197 984H279Q283 984 283 988V1003H193V988Q193 984 197 984Z" fill="#48262b"/>
<rect x="193" y="1003" width="90" height="1.5" fill="#a6a6a6"/>
<text x="198.6" y="997.8" font-size="14.5" fill="#f0f0f0" textLength="27.6" lengthAdjust="spacingAndGlyphs">Ch 3</text>
<rect x="193" y="1004.5" width="90" height="17.2" fill="#ff0000"/>
<path d="M201 1006L209 1019.5H193Z" fill="#f0e800" stroke="#3a3a6a" stroke-width="0.8" stroke-linejoin="round"/>
<path d="M201 1009.5V1016" stroke="#8a8a40" stroke-width="1.3"/>
<text x="209.7" y="1017" font-size="15" fill="#ffffff" textLength="57" lengthAdjust="spacingAndGlyphs">Clipping</text>
<text x="199" y="1036.8" font-size="14.5" fill="#111" textLength="73" lengthAdjust="spacingAndGlyphs">450 mV/div</text>
<text x="199" y="1055.5" font-size="14.5" fill="#111" textLength="35" lengthAdjust="spacingAndGlyphs">1 MΩ</text>
<text x="199" y="1074.8" font-size="14.5" fill="#111" textLength="52" lengthAdjust="spacingAndGlyphs">200 kHz</text>
<text x="265" y="1070" font-size="9" fill="#111">B</text><text x="270.5" y="1073" font-size="9" fill="#111">w</text>
<path d="M292 1003H374Q378 1003 378 1007V1074.5Q378 1078.5 374 1078.5H292Q288 1078.5 288 1074.5V1007Q288 1003 292 1003Z" fill="#c8c8c8"/>
<path d="M292 1003H374Q378 1003 378 1007V1022H288V1007Q288 1003 292 1003Z" fill="#37432a"/>
<rect x="288" y="1022" width="90" height="1.5" fill="#a6a6a6"/>
<text x="293.6" y="1016.8" font-size="14.5" fill="#8ccc2e" textLength="27.6" lengthAdjust="spacingAndGlyphs">Ch 4</text>
<text x="294" y="1036.8" font-size="14.5" fill="#111" textLength="73" lengthAdjust="spacingAndGlyphs">200 mV/div</text>
<text x="294" y="1055.5" font-size="14.5" fill="#111" textLength="35" lengthAdjust="spacingAndGlyphs">1 MΩ</text>
<text x="294" y="1074.8" font-size="14.5" fill="#111" textLength="52" lengthAdjust="spacingAndGlyphs">200 kHz</text>
<text x="360" y="1070" font-size="9" fill="#111">B</text><text x="365.5" y="1073" font-size="9" fill="#111">w</text>
<path d="M387 1003H469Q473 1003 473 1007V1074.5Q473 1078.5 469 1078.5H387Q383 1078.5 383 1074.5V1007Q383 1003 387 1003Z" fill="#c8c8c8"/>
<path d="M387 1003H469Q473 1003 473 1007V1022H383V1007Q383 1003 387 1003Z" fill="#4a3522"/>
<rect x="383" y="1022" width="90" height="1.5" fill="#a6a6a6"/>
<text x="388.6" y="1016.8" font-size="14.5" fill="#f5a030" textLength="27.6" lengthAdjust="spacingAndGlyphs">Ch 5</text>
<text x="389" y="1036.8" font-size="14.5" fill="#111" textLength="43" lengthAdjust="spacingAndGlyphs">1 V/div</text>
<text x="389" y="1055.5" font-size="14.5" fill="#111" textLength="35" lengthAdjust="spacingAndGlyphs">1 MΩ</text>
<text x="389" y="1074.8" font-size="14.5" fill="#111" textLength="52" lengthAdjust="spacingAndGlyphs">200 kHz</text>
<text x="455" y="1070" font-size="9" fill="#111">B</text><text x="460.5" y="1073" font-size="9" fill="#111">w</text>
<path d="M482 984H564Q568 984 568 988V1074.5Q568 1078.5 564 1078.5H482Q478 1078.5 478 1074.5V988Q478 984 482 984Z" fill="#c8c8c8"/>
<path d="M482 984H564Q568 984 568 988V1003H478V988Q478 984 482 984Z" fill="#2626c4"/>
<rect x="478" y="1003" width="90" height="1.5" fill="#a6a6a6"/>
<text x="483.6" y="997.8" font-size="14.5" fill="#f0f0f0" textLength="27.6" lengthAdjust="spacingAndGlyphs">Ch 6</text>
<rect x="478" y="1004.5" width="90" height="17.2" fill="#ff0000"/>
<path d="M486 1006L494 1019.5H478Z" fill="#f0e800" stroke="#3a3a6a" stroke-width="0.8" stroke-linejoin="round"/>
<path d="M486 1009.5V1016" stroke="#8a8a40" stroke-width="1.3"/>
<text x="494.7" y="1017" font-size="15" fill="#ffffff" textLength="57" lengthAdjust="spacingAndGlyphs">Clipping</text>
<text x="484" y="1036.8" font-size="14.5" fill="#111" textLength="73" lengthAdjust="spacingAndGlyphs">750 mV/div</text>
<text x="484" y="1055.5" font-size="14.5" fill="#111" textLength="35" lengthAdjust="spacingAndGlyphs">1 MΩ</text>
<text x="484" y="1074.8" font-size="14.5" fill="#111" textLength="52" lengthAdjust="spacingAndGlyphs">200 kHz</text>
<text x="550" y="1070" font-size="9" fill="#111">B</text><text x="555.5" y="1073" font-size="9" fill="#111">w</text>
<path d="M577 1003H659Q663 1003 663 1007V1074.5Q663 1078.5 659 1078.5H577Q573 1078.5 573 1074.5V1007Q573 1003 577 1003Z" fill="#c8c8c8"/>
<path d="M577 1003H659Q663 1003 663 1007V1022H573V1007Q573 1003 577 1003Z" fill="#4a3520"/>
<rect x="573" y="1022" width="90" height="1.5" fill="#a6a6a6"/>
<text x="578.6" y="1016.8" font-size="14.5" fill="#f5a030" textLength="47.6" lengthAdjust="spacingAndGlyphs">Math 1</text>
<text x="579" y="1036.8" font-size="14.5" fill="#111" font-weight="bold" textLength="81" lengthAdjust="spacingAndGlyphs">74.4 mT/div</text>
<text x="579" y="1055.5" font-size="14.5" fill="#111" textLength="73" lengthAdjust="spacingAndGlyphs">Intg(Ch2)...</text>
<path d="M672 1003H754Q758 1003 758 1007V1074.5Q758 1078.5 754 1078.5H672Q668 1078.5 668 1074.5V1007Q668 1003 672 1003Z" fill="#c8c8c8"/>
<path d="M672 1003H754Q758 1003 758 1007V1022H668V1007Q668 1003 672 1003Z" fill="#2e2234"/>
<rect x="668" y="1022" width="90" height="1.5" fill="#a6a6a6"/>
<text x="673.6" y="1016.8" font-size="14.5" fill="#f0f0f0" textLength="49.3" lengthAdjust="spacingAndGlyphs">Math 2</text>
<text x="674" y="1036.8" font-size="14.5" fill="#111" font-weight="bold" textLength="81" lengthAdjust="spacingAndGlyphs">972.27 A/...</text>
<text x="674" y="1055.5" font-size="14.5" fill="#111" textLength="74" lengthAdjust="spacingAndGlyphs">-Intg(Ch3...</text>
<rect x="1129.7" y="999.7" width="38.4" height="78.4" rx="6" fill="url(#btn)" stroke="#6a625b" stroke-width="1"/>
<rect x="1133.2" y="1007" width="31.5" height="2.2" fill="#c02424"/>
<text x="1148.9" y="1033" font-size="15" fill="#f0f0f0" text-anchor="middle" textLength="26" lengthAdjust="spacingAndGlyphs">Add</text>
<text x="1148.9" y="1048.6" font-size="15" fill="#f0f0f0" text-anchor="middle" textLength="29" lengthAdjust="spacingAndGlyphs">New</text>
<text x="1148.9" y="1065" font-size="15" fill="#f0f0f0" text-anchor="middle">Math</text>
<rect x="1174.7" y="999.7" width="38.4" height="78.4" rx="6" fill="url(#btn)" stroke="#6a625b" stroke-width="1"/>
<rect x="1178.2" y="1007" width="31.5" height="2.2" fill="#c4c8dc"/>
<text x="1193.9" y="1033" font-size="15" fill="#f0f0f0" text-anchor="middle" textLength="26" lengthAdjust="spacingAndGlyphs">Add</text>
<text x="1193.9" y="1048.6" font-size="15" fill="#f0f0f0" text-anchor="middle" textLength="29" lengthAdjust="spacingAndGlyphs">New</text>
<text x="1193.9" y="1065" font-size="15" fill="#f0f0f0" text-anchor="middle">Ref</text>
<rect x="1219.7" y="999.7" width="38.4" height="78.4" rx="6" fill="url(#btn)" stroke="#6a625b" stroke-width="1"/>
<rect x="1223.2" y="1007" width="31.5" height="2.2" fill="#c452f2"/>
<text x="1238.9" y="1033" font-size="15" fill="#f0f0f0" text-anchor="middle" textLength="26" lengthAdjust="spacingAndGlyphs">Add</text>
<text x="1238.9" y="1048.6" font-size="15" fill="#f0f0f0" text-anchor="middle" textLength="29" lengthAdjust="spacingAndGlyphs">New</text>
<text x="1238.9" y="1065" font-size="15" fill="#f0f0f0" text-anchor="middle">Bus</text>
<path d="M1285 1003.5H1475Q1479 1003.5 1479 1007.5V1074.5Q1479 1078.5 1475 1078.5H1285Q1281 1078.5 1281 1074.5V1007.5Q1281 1003.5 1285 1003.5Z" fill="#c8c8c8" stroke="#1a1a1a" stroke-width="1"/>
<path d="M1285 1003.5H1475Q1479 1003.5 1479 1007.5V1022.4H1281V1007.5Q1281 1003.5 1285 1003.5Z" fill="#5a5a5c"/>
<rect x="1281" y="1022.4" width="198" height="1.5" fill="#9a9a9a"/>
<text x="1286.3" y="1017.8" font-size="15" fill="#f0f0f0" textLength="73" lengthAdjust="spacingAndGlyphs">Horizontal</text>
<text x="1285" y="1036.7" font-size="14.5" fill="#111" textLength="53" lengthAdjust="spacingAndGlyphs">4 ms/div</text>
<text x="1391" y="1036.7" font-size="14.5" fill="#111" textLength="39" lengthAdjust="spacingAndGlyphs">40 ms</text>
<text x="1285" y="1055.6" font-size="14.5" fill="#111" textLength="67" lengthAdjust="spacingAndGlyphs">SR: 1 MS/s</text>
<text x="1392" y="1055.6" font-size="14.5" fill="#111" textLength="43" lengthAdjust="spacingAndGlyphs">1 µs/pt</text>
<text x="1285" y="1074.3" font-size="14.5" fill="#111" textLength="70" lengthAdjust="spacingAndGlyphs">RL: 40 kpts</text>
<path d="M1391.5 1063.5H1400V1072H1397.5L1395.7 1075L1394 1072H1391.5Z" fill="#f28c28"/><path d="M1393 1065H1398.5V1070.8H1393Z" fill="#111"/><path d="M1393.8 1066H1397.7V1067.2H1396.3V1070.3H1395.2V1067.2H1393.8Z" fill="#f0f0f0"/>
<text x="1405" y="1074.3" font-size="14.5" fill="#111" textLength="22" lengthAdjust="spacingAndGlyphs">3%</text>
<path d="M1490 1003.5H1640Q1644 1003.5 1644 1007.5V1074.5Q1644 1078.5 1640 1078.5H1490Q1486 1078.5 1486 1074.5V1007.5Q1486 1003.5 1490 1003.5Z" fill="#c8c8c8" stroke="#1a1a1a" stroke-width="1"/>
<path d="M1490 1003.5H1640Q1644 1003.5 1644 1007.5V1022.4H1486V1007.5Q1486 1003.5 1490 1003.5Z" fill="#5a5a5c"/>
<rect x="1486" y="1022.4" width="158" height="1.5" fill="#9a9a9a"/>
<text x="1491.3" y="1017.8" font-size="15" fill="#f0f0f0" textLength="49" lengthAdjust="spacingAndGlyphs">Trigger</text>
<rect x="1490.5" y="1025.5" width="29" height="15" rx="4" fill="#2424c0" stroke="#111" stroke-width="1"/>
<text x="1505" y="1038" font-size="14.5" fill="#f0f0f0" text-anchor="middle">6</text>
<path d="M1530 1037H1533.5L1541 1028.5H1546" fill="none" stroke="#4a4ab0" stroke-width="1.3"/>
<text x="1556" y="1036.7" font-size="14.5" fill="#111" textLength="21" lengthAdjust="spacingAndGlyphs">3 V</text>
<path d="M1655 1003.5H1795Q1799 1003.5 1799 1007.5V1074.5Q1799 1078.5 1795 1078.5H1655Q1651 1078.5 1651 1074.5V1007.5Q1651 1003.5 1655 1003.5Z" fill="#c8c8c8" stroke="#1a1a1a" stroke-width="1"/>
<path d="M1655 1003.5H1795Q1799 1003.5 1799 1007.5V1022.4H1651V1007.5Q1651 1003.5 1655 1003.5Z" fill="#5a5a5c"/>
<rect x="1651" y="1022.4" width="148" height="1.5" fill="#9a9a9a"/>
<text x="1656.3" y="1017.8" font-size="15" fill="#f0f0f0" textLength="77" lengthAdjust="spacingAndGlyphs">Acquisition</text>
<text x="1655.5" y="1036.7" font-size="14.5" fill="#111" textLength="51" lengthAdjust="spacingAndGlyphs">Manual,</text>
<text x="1736" y="1036.7" font-size="14.5" fill="#111" textLength="50" lengthAdjust="spacingAndGlyphs">Analyze</text>
<text x="1655.5" y="1055.6" font-size="14.5" fill="#111" textLength="107" lengthAdjust="spacingAndGlyphs">High Res: 16 bits</text>
<text x="1655.5" y="1074.3" font-size="14.5" fill="#111" textLength="70" lengthAdjust="spacingAndGlyphs">Single: 1 /1</text>
<rect x="1822.5" y="999.5" width="88.5" height="35" rx="6" fill="#ff1c24" stroke="#4a4a4a" stroke-width="1"/>
<text x="1866.5" y="1021.2" font-size="14" fill="#ffffff" text-anchor="middle" font-weight="bold" textLength="55" lengthAdjust="spacingAndGlyphs">Stopped</text>
<rect x="1822.5" y="1040.5" width="89" height="38" rx="5" fill="#c8c8c8" stroke="#3a3a3a" stroke-width="1"/>
<text x="1867" y="1054.2" font-size="14.5" fill="#111" text-anchor="middle" textLength="85" lengthAdjust="spacingAndGlyphs">06 May 2025</text>
<text x="1867" y="1071.8" font-size="14.5" fill="#111" text-anchor="middle" textLength="74" lengthAdjust="spacingAndGlyphs">5:23:56 PM</text>
</svg></body></html>
